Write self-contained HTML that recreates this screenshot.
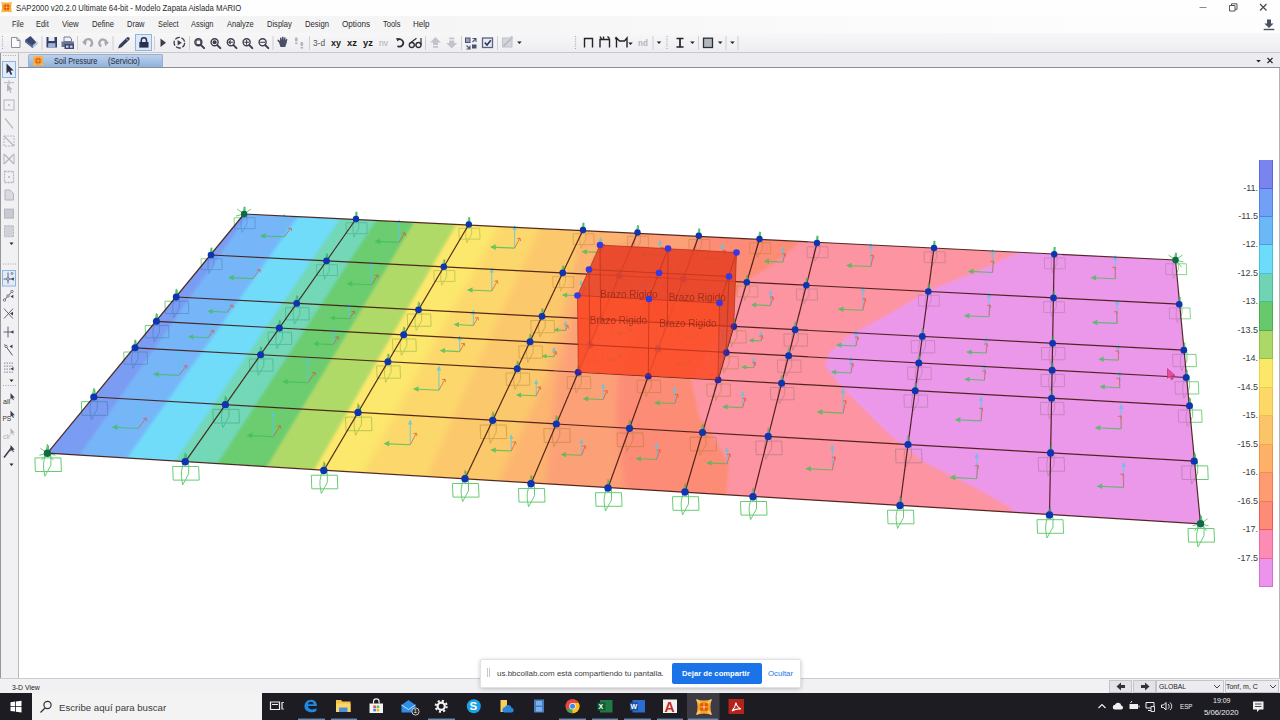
<!DOCTYPE html><html lang="es"><head><meta charset="utf-8"><title>SAP2000</title><style>
*{margin:0;padding:0;box-sizing:border-box}
html,body{width:1280px;height:720px;overflow:hidden;background:#fff}
body{font-family:"Liberation Sans",sans-serif;color:#222;position:relative}
#app{position:absolute;left:0;top:0;width:1280px;height:720px;overflow:hidden;background:#fff}
.abs{position:absolute}
.t{position:absolute;white-space:nowrap;line-height:1}
#title{left:0;top:0;width:1280px;height:16px;background:#fefefe}
#menu{left:0;top:16px;width:1280px;height:17px;background:linear-gradient(90deg,#f3f3f4 0%,#f6f6f7 40%,#fdfdfd 85%)}
#tool{left:0;top:33px;width:1280px;height:19px;background:linear-gradient(#f7f7f8,#eeeef1)}
#tabs{left:0;top:52px;width:1280px;height:16px;background:#ebebf0;border-top:1px solid #c9c9cc;border-bottom:1px solid #8e8e92}
#tab{left:28px;top:54px;width:135px;height:13px;background:linear-gradient(#bcd0ea,#8fb2dd);border:1px solid #9ab0cc;border-bottom:none;border-radius:2px 2px 0 0}
#left{left:0;top:53px;width:18.5px;height:626px;background:#f1f1f4;border-right:1px solid #b9b9be;border-left:1px solid #96969a}
#status{left:0;top:678px;width:1280px;height:15px;background:#f1f1f4;border-top:1px solid #cdcdd0}
#task{left:0;top:693px;width:1280px;height:27px;background:#1d1c23}
#search{left:32px;top:693px;width:230px;height:27px;background:#f3f3f4}
.m{position:absolute;top:20px;font-size:8.6px;line-height:9px;color:#2a2a2a;white-space:nowrap}
#share{left:480px;top:658.5px;width:321px;height:29px;background:#fff;border:1px solid #e2e2e5;border-radius:2px;box-shadow:0 1px 4px rgba(0,0,0,.22)}
#stop{left:672px;top:662.5px;width:89.5px;height:21px;background:#1a73e8;border-radius:2px;color:#fff;font-weight:bold;font-size:7.6px;text-align:center;line-height:19px;white-space:nowrap}
</style></head><body><div id="app">
<svg id="model" width="1280" height="720" viewBox="0 0 1280 720" style="position:absolute;left:0;top:0">
<defs><clipPath id="slab"><polygon points="244.1,214 1175.5,260 1200.5,523.8 47.4,453.2"/></clipPath>
<filter id="bl" x="-5%" y="-5%" width="110%" height="110%"><feGaussianBlur stdDeviation="1.4"/></filter>
<filter id="bl2" x="-5%" y="-5%" width="110%" height="110%"><feGaussianBlur stdDeviation="0.45"/></filter>
<g id="sp"><path d="M-12.5 4.7h26l.5 13.6h-26zM0 -9L3.5 3v9L-2.5 23l-1.3-8v-5z" fill="none" stroke-width="1"/></g>
<filter id="bl3" x="-2%" y="-2%" width="104%" height="104%"><feGaussianBlur stdDeviation="0.3"/></filter>
<filter id="blw" x="-5%" y="-5%" width="110%" height="110%"><feGaussianBlur stdDeviation="3.5"/></filter>
</defs>
<g opacity=".85" filter="url(#bl2)">
<use href="#sp" transform="translate(244.1 214) scale(0.8)" stroke="#4cc25a"/>
<use href="#sp" transform="translate(356 219) scale(0.8)" stroke="#4cc25a"/>
<use href="#sp" transform="translate(468.8 224.5) scale(0.8)" stroke="#4cc25a"/>
<use href="#sp" transform="translate(583 230) scale(0.8)" stroke="#4cc25a"/>
<use href="#sp" transform="translate(637.5 232.5) scale(0.8)" stroke="#4cc25a"/>
<use href="#sp" transform="translate(698.8 235.8) scale(0.8)" stroke="#4cc25a"/>
<use href="#sp" transform="translate(759.5 239) scale(0.8)" stroke="#4cc25a"/>
<use href="#sp" transform="translate(817 243) scale(0.8)" stroke="#4cc25a"/>
<use href="#sp" transform="translate(934 248) scale(0.8)" stroke="#4cc25a"/>
<use href="#sp" transform="translate(1054.2 254.2) scale(0.8)" stroke="#4cc25a"/>
<use href="#sp" transform="translate(1175.5 260) scale(0.8)" stroke="#4cc25a"/>
<use href="#sp" transform="translate(211 255) scale(0.8)" stroke="#4cc25a"/>
<use href="#sp" transform="translate(1179.2 304.2) scale(0.8)" stroke="#4cc25a"/>
<use href="#sp" transform="translate(176.2 297) scale(0.9)" stroke="#4cc25a"/>
<use href="#sp" transform="translate(1183.8 350.2) scale(0.9)" stroke="#4cc25a"/>
<use href="#sp" transform="translate(156.4 321.3) scale(0.9)" stroke="#4cc25a"/>
<use href="#sp" transform="translate(1186.2 377.5) scale(0.9)" stroke="#4cc25a"/>
<use href="#sp" transform="translate(135 347.8) scale(0.9)" stroke="#4cc25a"/>
<use href="#sp" transform="translate(1189.5 405.8) scale(0.9)" stroke="#4cc25a"/>
<use href="#sp" transform="translate(93.8 397) scale(1)" stroke="#4cc25a"/>
<use href="#sp" transform="translate(1194.2 461.2) scale(1)" stroke="#4cc25a"/>
<use href="#sp" transform="translate(47.4 453.2) scale(1)" stroke="#4cc25a"/>
<use href="#sp" transform="translate(185.2 461.8) scale(1)" stroke="#4cc25a"/>
<use href="#sp" transform="translate(323.8 470.5) scale(1)" stroke="#4cc25a"/>
<use href="#sp" transform="translate(465 478.8) scale(1)" stroke="#4cc25a"/>
<use href="#sp" transform="translate(531 483.8) scale(1)" stroke="#4cc25a"/>
<use href="#sp" transform="translate(608 488) scale(1)" stroke="#4cc25a"/>
<use href="#sp" transform="translate(685 492) scale(1)" stroke="#4cc25a"/>
<use href="#sp" transform="translate(753 496.8) scale(1)" stroke="#4cc25a"/>
<use href="#sp" transform="translate(900 505.5) scale(1)" stroke="#4cc25a"/>
<use href="#sp" transform="translate(1049.5 515) scale(1)" stroke="#4cc25a"/>
<use href="#sp" transform="translate(1200.5 523.8) scale(1)" stroke="#4cc25a"/>
<path d="M244.1 214l-7 -5M244.1 214l7 -5M244.1 214l-8 2M244.1 214l8 2M244.1 214l-6 7M244.1 214l6 7" stroke="#4cc25a" stroke-width="1" fill="none"/>
<path d="M1175.5 260l-7 -5M1175.5 260l7 -5M1175.5 260l-8 2M1175.5 260l8 2M1175.5 260l-6 7M1175.5 260l6 7" stroke="#4cc25a" stroke-width="1" fill="none"/>
<path d="M47.4 453.2l-7 -5M47.4 453.2l7 -5M47.4 453.2l-8 2M47.4 453.2l8 2M47.4 453.2l-6 7M47.4 453.2l6 7" stroke="#4cc25a" stroke-width="1" fill="none"/>
<path d="M1200.5 523.8l-7 -5M1200.5 523.8l7 -5M1200.5 523.8l-8 2M1200.5 523.8l8 2M1200.5 523.8l-6 7M1200.5 523.8l6 7" stroke="#4cc25a" stroke-width="1" fill="none"/>
</g>
<g clip-path="url(#slab)">
<g filter="url(#bl)">
<rect x="0" y="150" width="1280" height="450" fill="#7a9cf2"/>
<polygon points="250,100 250,212 77.5,458 47.5,620 1400,620 1400,100" fill="#76b6f8"/>
<polygon points="299,100 299,215 125,461 95,620 1400,620 1400,100" fill="#70dcfa"/>
<polygon points="341,100 341,217 173,464 143,620 1400,620 1400,100" fill="#72d8b8"/>
<polygon points="377,100 377,219 215,467 185,620 1400,620 1400,100" fill="#6ccc70"/>
<polygon points="415,100 415,221 265,470 235,620 1400,620 1400,100" fill="#b0da68"/>
<polygon points="458,100 458,222 357.5,395 312,474 282,620 1400,620 1400,100" fill="#fce86c"/>
</g><g filter="url(#blw)">
<polygon points="500,100 500,224 405,395 361,476 331,620 1400,620 1400,100" fill="#fcd86c"/>
<polygon points="541,100 541,226 462.5,395 425,480 395,620 1400,620 1400,100" fill="#fcc86c"/>
<polygon points="584,100 584,228 562,315 545,380 497,486 467,620 1400,620 1400,100" fill="#fcb470"/>
<polygon points="641,100 641,231 600,260 572,320 556,380 545,488 515,620 1400,620 1400,100" fill="#fca078"/>
<polygon points="702,100 702,234 650,300 618,370 616,420 624,492 594,620 1400,620 1400,100" fill="#fc8c76"/>
</g><g filter="url(#bl)">
<polygon points="802,100 802,240 785,255 764,270 742,283 720,330 691,379 699,417 710,432 729,464 726,498 696,620 1400,620 1400,100" fill="#fc94a2"/>
<polygon points="1022,100 1022,251 975,272.5 930,290 887.5,315 850,335 829,353 825,366 840,385 860,405 890,435 925,462.5 975,487.5 1010,507.5 1016,516 986,620 1400,620 1400,100" fill="#ec98ea"/>
</g></g>
<g opacity=".42" clip-path="url(#slab)">
<use href="#sp" transform="translate(244.1 214) scale(0.8)" stroke="#2f6f9a"/>
<use href="#sp" transform="translate(356 219) scale(0.8)" stroke="#2f8f6a"/>
<use href="#sp" transform="translate(468.8 224.5) scale(0.8)" stroke="#5a9a2a"/>
<use href="#sp" transform="translate(583 230) scale(0.8)" stroke="#a07a20"/>
<use href="#sp" transform="translate(637.5 232.5) scale(0.8)" stroke="#a07a20"/>
<use href="#sp" transform="translate(698.8 235.8) scale(0.8)" stroke="#a07a20"/>
<use href="#sp" transform="translate(759.5 239) scale(0.8)" stroke="#a07a20"/>
<use href="#sp" transform="translate(817 243) scale(0.8)" stroke="#8a6a80"/>
<use href="#sp" transform="translate(934 248) scale(0.8)" stroke="#8a6a80"/>
<use href="#sp" transform="translate(1054.2 254.2) scale(0.8)" stroke="#8a6a80"/>
<use href="#sp" transform="translate(1175.5 260) scale(0.8)" stroke="#8a6a80"/>
<use href="#sp" transform="translate(211 255) scale(0.8)" stroke="#2f6f9a"/>
<use href="#sp" transform="translate(326.5 260.9) scale(0.8)" stroke="#2f8f6a"/>
<use href="#sp" transform="translate(443.8 266.8) scale(0.8)" stroke="#5a9a2a"/>
<use href="#sp" transform="translate(562.7 272.9) scale(0.8)" stroke="#a07a20"/>
<use href="#sp" transform="translate(619.2 275.8) scale(0.8)" stroke="#a07a20"/>
<use href="#sp" transform="translate(683.2 279) scale(0.8)" stroke="#a07a20"/>
<use href="#sp" transform="translate(746.8 282.3) scale(0.8)" stroke="#a07a20"/>
<use href="#sp" transform="translate(806.3 285.3) scale(0.8)" stroke="#8a6a80"/>
<use href="#sp" transform="translate(928.3 291.5) scale(0.8)" stroke="#8a6a80"/>
<use href="#sp" transform="translate(1053.5 297.9) scale(0.8)" stroke="#8a6a80"/>
<use href="#sp" transform="translate(1179.2 304.2) scale(0.8)" stroke="#8a6a80"/>
<use href="#sp" transform="translate(176.2 297) scale(0.9)" stroke="#2f6f9a"/>
<use href="#sp" transform="translate(296.7 303.4) scale(0.9)" stroke="#2f8f6a"/>
<use href="#sp" transform="translate(418.5 309.8) scale(0.9)" stroke="#5a9a2a"/>
<use href="#sp" transform="translate(542 316.3) scale(0.9)" stroke="#a07a20"/>
<use href="#sp" transform="translate(600.7 319.4) scale(0.9)" stroke="#a07a20"/>
<use href="#sp" transform="translate(667.4 323) scale(0.9)" stroke="#a07a20"/>
<use href="#sp" transform="translate(733.7 326.5) scale(0.9)" stroke="#a07a20"/>
<use href="#sp" transform="translate(795.1 329.7) scale(0.9)" stroke="#8a6a80"/>
<use href="#sp" transform="translate(922.3 336.4) scale(0.9)" stroke="#8a6a80"/>
<use href="#sp" transform="translate(1052.6 343.3) scale(0.9)" stroke="#8a6a80"/>
<use href="#sp" transform="translate(1183.8 350.2) scale(0.9)" stroke="#8a6a80"/>
<use href="#sp" transform="translate(156.4 321.3) scale(0.9)" stroke="#2f6f9a"/>
<use href="#sp" transform="translate(279.3 328) scale(0.9)" stroke="#2f8f6a"/>
<use href="#sp" transform="translate(403.7 334.8) scale(0.9)" stroke="#5a9a2a"/>
<use href="#sp" transform="translate(530 341.7) scale(0.9)" stroke="#a07a20"/>
<use href="#sp" transform="translate(589.8 345) scale(0.9)" stroke="#a07a20"/>
<use href="#sp" transform="translate(658.1 348.7) scale(0.9)" stroke="#a07a20"/>
<use href="#sp" transform="translate(726.1 352.4) scale(0.9)" stroke="#a07a20"/>
<use href="#sp" transform="translate(788.6 355.8) scale(0.9)" stroke="#8a6a80"/>
<use href="#sp" transform="translate(918.8 362.9) scale(0.9)" stroke="#8a6a80"/>
<use href="#sp" transform="translate(1052.1 370.2) scale(0.9)" stroke="#8a6a80"/>
<use href="#sp" transform="translate(1186.2 377.5) scale(0.9)" stroke="#8a6a80"/>
<use href="#sp" transform="translate(135 347.8) scale(0.9)" stroke="#2f6f9a"/>
<use href="#sp" transform="translate(260.6 354.7) scale(0.9)" stroke="#2f8f6a"/>
<use href="#sp" transform="translate(387.9 361.7) scale(0.9)" stroke="#5a9a2a"/>
<use href="#sp" transform="translate(517.2 368.8) scale(0.9)" stroke="#a07a20"/>
<use href="#sp" transform="translate(578.3 372.2) scale(0.9)" stroke="#a07a20"/>
<use href="#sp" transform="translate(648.3 376) scale(0.9)" stroke="#a07a20"/>
<use href="#sp" transform="translate(718 379.8) scale(0.9)" stroke="#a07a20"/>
<use href="#sp" transform="translate(781.6 383.3) scale(0.9)" stroke="#8a6a80"/>
<use href="#sp" transform="translate(915.2 390.7) scale(0.9)" stroke="#8a6a80"/>
<use href="#sp" transform="translate(1051.6 398.2) scale(0.9)" stroke="#8a6a80"/>
<use href="#sp" transform="translate(1189.5 405.8) scale(0.9)" stroke="#8a6a80"/>
<use href="#sp" transform="translate(93.8 397) scale(1)" stroke="#2f6f9a"/>
<use href="#sp" transform="translate(225.4 404.7) scale(1)" stroke="#2f8f6a"/>
<use href="#sp" transform="translate(358 412.4) scale(1)" stroke="#5a9a2a"/>
<use href="#sp" transform="translate(492.7 420.3) scale(1)" stroke="#a07a20"/>
<use href="#sp" transform="translate(556.3 424) scale(1)" stroke="#a07a20"/>
<use href="#sp" transform="translate(629.5 428.3) scale(1)" stroke="#a07a20"/>
<use href="#sp" transform="translate(702.5 432.5) scale(1)" stroke="#a07a20"/>
<use href="#sp" transform="translate(768.2 436.4) scale(1)" stroke="#8a6a80"/>
<use href="#sp" transform="translate(908 444.5) scale(1)" stroke="#8a6a80"/>
<use href="#sp" transform="translate(1050.6 452.9) scale(1)" stroke="#8a6a80"/>
<use href="#sp" transform="translate(1194.2 461.2) scale(1)" stroke="#8a6a80"/>
<use href="#sp" transform="translate(47.4 453.2) scale(1)" stroke="#2f6f9a"/>
<use href="#sp" transform="translate(185.2 461.8) scale(1)" stroke="#2f8f6a"/>
<use href="#sp" transform="translate(323.8 470.5) scale(1)" stroke="#5a9a2a"/>
<use href="#sp" transform="translate(465 478.8) scale(1)" stroke="#a07a20"/>
<use href="#sp" transform="translate(531 483.8) scale(1)" stroke="#a07a20"/>
<use href="#sp" transform="translate(608 488) scale(1)" stroke="#a07a20"/>
<use href="#sp" transform="translate(685 492) scale(1)" stroke="#a07a20"/>
<use href="#sp" transform="translate(753 496.8) scale(1)" stroke="#8a6a80"/>
<use href="#sp" transform="translate(900 505.5) scale(1)" stroke="#8a6a80"/>
<use href="#sp" transform="translate(1049.5 515) scale(1)" stroke="#8a6a80"/>
<use href="#sp" transform="translate(1200.5 523.8) scale(1)" stroke="#8a6a80"/>
</g>
<g fill="none" stroke-width="1.1" opacity=".78" filter="url(#bl2)">
<path d="M284.2 236.8L261 235.9" stroke="#3fbf55"/>
<path d="M260 235.9l5.5 -2.8v5.6z" fill="#3fbf55" stroke="none"/>
<path d="M284.2 236.8V214.7" stroke="#55c8e8"/>
<path d="M284.2 213.7l-2.3 5h4.6z" fill="#55c8e8" stroke="none"/>
<path d="M284.2 236.8L291.1 228" stroke="#d8553a" stroke-width=".9"/>
<path d="M291.1 228l-3 .6M291.1 228l.6 3" stroke="#d8553a" stroke-width=".9"/>
<path d="M398.9 242.4L375.6 241.4" stroke="#3fbf55"/>
<path d="M374.6 241.4l5.5 -2.8v5.6z" fill="#3fbf55" stroke="none"/>
<path d="M398.9 242.4V220.2" stroke="#55c8e8"/>
<path d="M398.9 219.2l-2.3 5h4.6z" fill="#55c8e8" stroke="none"/>
<path d="M398.9 242.4L405.1 232.9" stroke="#d8553a" stroke-width=".9"/>
<path d="M405.1 232.9l-3 .6M405.1 232.9l.6 3" stroke="#d8553a" stroke-width=".9"/>
<path d="M514.6 248.1L491.2 247.1" stroke="#3fbf55"/>
<path d="M490.2 247.1l5.5 -2.8v5.6z" fill="#3fbf55" stroke="none"/>
<path d="M514.6 248.1V225.9" stroke="#55c8e8"/>
<path d="M514.6 224.9l-2.3 5h4.6z" fill="#55c8e8" stroke="none"/>
<path d="M514.6 248.1L520 238.1" stroke="#d8553a" stroke-width=".9"/>
<path d="M520 238.1l-3 .6M520 238.1l.6 3" stroke="#d8553a" stroke-width=".9"/>
<path d="M600.7 252.4L582.6 251.8" stroke="#3fbf55"/>
<path d="M581.6 251.8l5.2 -2.6v5.3z" fill="#3fbf55" stroke="none"/>
<path d="M600.7 252.4V237.9" stroke="#55c8e8"/>
<path d="M600.7 236.9l-2.2 4.7h4.3z" fill="#55c8e8" stroke="none"/>
<path d="M600.7 252.4L604.3 244.4" stroke="#d8553a" stroke-width=".9"/>
<path d="M604.3 244.4l-3 .6M604.3 244.4l.6 3" stroke="#d8553a" stroke-width=".9"/>
<path d="M659.9 255.3L641.8 254.6" stroke="#3fbf55"/>
<path d="M640.8 254.6l5.2 -2.6v5.3z" fill="#3fbf55" stroke="none"/>
<path d="M659.9 255.3V240.8" stroke="#55c8e8"/>
<path d="M659.9 239.8l-2.2 4.7h4.3z" fill="#55c8e8" stroke="none"/>
<path d="M659.9 255.3L663.1 247.1" stroke="#d8553a" stroke-width=".9"/>
<path d="M663.1 247.1l-3 .6M663.1 247.1l.6 3" stroke="#d8553a" stroke-width=".9"/>
<path d="M722.3 258.5L704.2 257.9" stroke="#3fbf55"/>
<path d="M703.2 257.9l5.2 -2.6v5.3z" fill="#3fbf55" stroke="none"/>
<path d="M722.3 258.5V244" stroke="#55c8e8"/>
<path d="M722.3 243l-2.2 4.7h4.3z" fill="#55c8e8" stroke="none"/>
<path d="M722.3 258.5L725 250.2" stroke="#d8553a" stroke-width=".9"/>
<path d="M725 250.2l-3 .6M725 250.2l.6 3" stroke="#d8553a" stroke-width=".9"/>
<path d="M782.9 262.1L764.8 261.2" stroke="#3fbf55"/>
<path d="M763.8 261.2l5.2 -2.6v5.3z" fill="#3fbf55" stroke="none"/>
<path d="M782.9 262.1V247.6" stroke="#55c8e8"/>
<path d="M782.9 246.6l-2.2 4.7h4.3z" fill="#55c8e8" stroke="none"/>
<path d="M782.9 262.1L785 253.5" stroke="#d8553a" stroke-width=".9"/>
<path d="M785 253.5l-3 .6M785 253.5l.6 3" stroke="#d8553a" stroke-width=".9"/>
<path d="M870.8 266.5L847.2 265.5" stroke="#3fbf55"/>
<path d="M846.2 265.5l5.5 -2.8v5.6z" fill="#3fbf55" stroke="none"/>
<path d="M870.8 266.5V244" stroke="#55c8e8"/>
<path d="M870.8 243l-2.3 5h4.6z" fill="#55c8e8" stroke="none"/>
<path d="M870.8 266.5L873.3 255.2" stroke="#d8553a" stroke-width=".9"/>
<path d="M873.3 255.2l-3 .6M873.3 255.2l.6 3" stroke="#d8553a" stroke-width=".9"/>
<path d="M992.6 272.5L969 271.4" stroke="#3fbf55"/>
<path d="M968 271.4l5.5 -2.8v5.6z" fill="#3fbf55" stroke="none"/>
<path d="M992.6 272.5V250" stroke="#55c8e8"/>
<path d="M992.6 249l-2.3 5h4.6z" fill="#55c8e8" stroke="none"/>
<path d="M992.6 272.5L993.4 260.9" stroke="#d8553a" stroke-width=".9"/>
<path d="M993.4 260.9l-3 .6M993.4 260.9l.6 3" stroke="#d8553a" stroke-width=".9"/>
<path d="M1115.3 278.7L1091.6 277.7" stroke="#3fbf55"/>
<path d="M1090.6 277.7l5.5 -2.8v5.6z" fill="#3fbf55" stroke="none"/>
<path d="M1115.3 278.7V256.1" stroke="#55c8e8"/>
<path d="M1115.3 255.1l-2.3 5h4.6z" fill="#55c8e8" stroke="none"/>
<path d="M1115.3 278.7L1115.1 267" stroke="#d8553a" stroke-width=".9"/>
<path d="M1115.1 267l-3 .6M1115.1 267l.6 3" stroke="#d8553a" stroke-width=".9"/>
<path d="M252.8 278.6L229.1 277.6" stroke="#3fbf55"/>
<path d="M228.1 277.6l5.5 -2.8v5.6z" fill="#3fbf55" stroke="none"/>
<path d="M252.8 278.6V256.1" stroke="#55c8e8"/>
<path d="M252.8 255.1l-2.3 5h4.6z" fill="#55c8e8" stroke="none"/>
<path d="M252.8 278.6L259.9 269.4" stroke="#d8553a" stroke-width=".9"/>
<path d="M259.9 269.4l-3 .6M259.9 269.4l.6 3" stroke="#d8553a" stroke-width=".9"/>
<path d="M371.5 284.8L347.7 283.7" stroke="#3fbf55"/>
<path d="M346.7 283.7l5.5 -2.8v5.6z" fill="#3fbf55" stroke="none"/>
<path d="M371.5 284.8V262.2" stroke="#55c8e8"/>
<path d="M371.5 261.2l-2.3 5h4.6z" fill="#55c8e8" stroke="none"/>
<path d="M371.5 284.8L377.9 275" stroke="#d8553a" stroke-width=".9"/>
<path d="M377.9 275l-3 .6M377.9 275l.6 3" stroke="#d8553a" stroke-width=".9"/>
<path d="M491.8 291L468 290" stroke="#3fbf55"/>
<path d="M467 290l5.5 -2.8v5.6z" fill="#3fbf55" stroke="none"/>
<path d="M491.8 291V268.4" stroke="#55c8e8"/>
<path d="M491.8 267.4l-2.3 5h4.6z" fill="#55c8e8" stroke="none"/>
<path d="M491.8 291L497.4 280.7" stroke="#d8553a" stroke-width=".9"/>
<path d="M497.4 280.7l-3 .6M497.4 280.7l.6 3" stroke="#d8553a" stroke-width=".9"/>
<path d="M581.3 295.7L562.9 295" stroke="#3fbf55"/>
<path d="M561.9 295l5.2 -2.6v5.3z" fill="#3fbf55" stroke="none"/>
<path d="M581.3 295.7V281" stroke="#55c8e8"/>
<path d="M581.3 280l-2.2 4.7h4.3z" fill="#55c8e8" stroke="none"/>
<path d="M581.3 295.7L585 287.4" stroke="#d8553a" stroke-width=".9"/>
<path d="M585 287.4l-3 .6M585 287.4l.6 3" stroke="#d8553a" stroke-width=".9"/>
<path d="M642.7 298.8L624.3 298.1" stroke="#3fbf55"/>
<path d="M623.3 298.1l5.2 -2.6v5.3z" fill="#3fbf55" stroke="none"/>
<path d="M642.7 298.8V284.1" stroke="#55c8e8"/>
<path d="M642.7 283.1l-2.2 4.7h4.3z" fill="#55c8e8" stroke="none"/>
<path d="M642.7 298.8L646.1 290.4" stroke="#d8553a" stroke-width=".9"/>
<path d="M646.1 290.4l-3 .6M646.1 290.4l.6 3" stroke="#d8553a" stroke-width=".9"/>
<path d="M707.9 302.2L689.4 301.5" stroke="#3fbf55"/>
<path d="M688.4 301.5l5.2 -2.6v5.3z" fill="#3fbf55" stroke="none"/>
<path d="M707.9 302.2V287.4" stroke="#55c8e8"/>
<path d="M707.9 286.4l-2.2 4.7h4.3z" fill="#55c8e8" stroke="none"/>
<path d="M707.9 302.2L710.7 293.5" stroke="#d8553a" stroke-width=".9"/>
<path d="M710.7 293.5l-3 .6M710.7 293.5l.6 3" stroke="#d8553a" stroke-width=".9"/>
<path d="M770.5 305.6L752.1 304.8" stroke="#3fbf55"/>
<path d="M751.1 304.8l5.2 -2.6v5.3z" fill="#3fbf55" stroke="none"/>
<path d="M770.5 305.6V290.8" stroke="#55c8e8"/>
<path d="M770.5 289.8l-2.2 4.7h4.3z" fill="#55c8e8" stroke="none"/>
<path d="M770.5 305.6L773 296.8" stroke="#d8553a" stroke-width=".9"/>
<path d="M773 296.8l-3 .6M773 296.8l.6 3" stroke="#d8553a" stroke-width=".9"/>
<path d="M862.9 310.2L838.9 309.2" stroke="#3fbf55"/>
<path d="M837.9 309.2l5.5 -2.8v5.6z" fill="#3fbf55" stroke="none"/>
<path d="M862.9 310.2V287.4" stroke="#55c8e8"/>
<path d="M862.9 286.4l-2.3 5h4.6z" fill="#55c8e8" stroke="none"/>
<path d="M862.9 310.2L865.3 298.5" stroke="#d8553a" stroke-width=".9"/>
<path d="M865.3 298.5l-3 .6M865.3 298.5l.6 3" stroke="#d8553a" stroke-width=".9"/>
<path d="M989 316.8L964.9 315.7" stroke="#3fbf55"/>
<path d="M963.9 315.7l5.5 -2.8v5.6z" fill="#3fbf55" stroke="none"/>
<path d="M989 316.8V293.9" stroke="#55c8e8"/>
<path d="M989 292.9l-2.3 5h4.6z" fill="#55c8e8" stroke="none"/>
<path d="M989 316.8L990 304.9" stroke="#d8553a" stroke-width=".9"/>
<path d="M990 304.9l-3 .6M990 304.9l.6 3" stroke="#d8553a" stroke-width=".9"/>
<path d="M1117.1 323.4L1092.9 322.4" stroke="#3fbf55"/>
<path d="M1091.9 322.4l5.5 -2.8v5.6z" fill="#3fbf55" stroke="none"/>
<path d="M1117.1 323.4V300.4" stroke="#55c8e8"/>
<path d="M1117.1 299.4l-2.3 5h4.6z" fill="#55c8e8" stroke="none"/>
<path d="M1117.1 323.4L1116.7 311.4" stroke="#d8553a" stroke-width=".9"/>
<path d="M1116.7 311.4l-3 .6M1116.7 311.4l.6 3" stroke="#d8553a" stroke-width=".9"/>
<path d="M227 312.3L208.5 311.3" stroke="#3fbf55"/>
<path d="M207.5 311.3l5.2 -2.6v5.3z" fill="#3fbf55" stroke="none"/>
<path d="M227 312.3V297.4" stroke="#55c8e8"/>
<path d="M227 296.4l-2.2 4.7h4.3z" fill="#55c8e8" stroke="none"/>
<path d="M227 312.3L232.7 305" stroke="#d8553a" stroke-width=".9"/>
<path d="M232.7 305l-3 .6M232.7 305l.6 3" stroke="#d8553a" stroke-width=".9"/>
<path d="M349.4 318.8L330.8 317.9" stroke="#3fbf55"/>
<path d="M329.8 317.9l5.2 -2.6v5.3z" fill="#3fbf55" stroke="none"/>
<path d="M349.4 318.8V303.9" stroke="#55c8e8"/>
<path d="M349.4 302.9l-2.2 4.7h4.3z" fill="#55c8e8" stroke="none"/>
<path d="M349.4 318.8L354.5 311.1" stroke="#d8553a" stroke-width=".9"/>
<path d="M354.5 311.1l-3 .6M354.5 311.1l.6 3" stroke="#d8553a" stroke-width=".9"/>
<path d="M473.4 325.5L454.7 324.5" stroke="#3fbf55"/>
<path d="M453.7 324.5l5.2 -2.6v5.3z" fill="#3fbf55" stroke="none"/>
<path d="M473.4 325.5V310.6" stroke="#55c8e8"/>
<path d="M473.4 309.6l-2.2 4.7h4.3z" fill="#55c8e8" stroke="none"/>
<path d="M473.4 325.5L477.9 317.4" stroke="#d8553a" stroke-width=".9"/>
<path d="M477.9 317.4l-3 .6M477.9 317.4l.6 3" stroke="#d8553a" stroke-width=".9"/>
<path d="M565.6 330.5L554.7 329.9" stroke="#3fbf55"/>
<path d="M553.7 329.9l4.7 -2.4v4.8z" fill="#3fbf55" stroke="none"/>
<path d="M565.6 330.5V321.7" stroke="#55c8e8"/>
<path d="M565.6 320.7l-2 4.3h4z" fill="#55c8e8" stroke="none"/>
<path d="M565.6 330.5L567.9 325.5" stroke="#d8553a" stroke-width=".9"/>
<path d="M567.9 325.5l-3 .6M567.9 325.5l.6 3" stroke="#d8553a" stroke-width=".9"/>
<path d="M629 333.8L618 333.3" stroke="#3fbf55"/>
<path d="M617 333.3l4.7 -2.4v4.8z" fill="#3fbf55" stroke="none"/>
<path d="M629 333.8V325.1" stroke="#55c8e8"/>
<path d="M629 324.1l-2 4.3h4z" fill="#55c8e8" stroke="none"/>
<path d="M629 333.8L631 328.8" stroke="#d8553a" stroke-width=".9"/>
<path d="M631 328.8l-3 .6M631 328.8l.6 3" stroke="#d8553a" stroke-width=".9"/>
<path d="M696.3 337.5L685.4 336.9" stroke="#3fbf55"/>
<path d="M684.4 336.9l4.7 -2.4v4.8z" fill="#3fbf55" stroke="none"/>
<path d="M696.3 337.5V328.7" stroke="#55c8e8"/>
<path d="M696.3 327.7l-2 4.3h4z" fill="#55c8e8" stroke="none"/>
<path d="M696.3 337.5L698 332.3" stroke="#d8553a" stroke-width=".9"/>
<path d="M698 332.3l-3 .6M698 332.3l.6 3" stroke="#d8553a" stroke-width=".9"/>
<path d="M760.9 341L749.9 340.4" stroke="#3fbf55"/>
<path d="M748.9 340.4l4.7 -2.4v4.8z" fill="#3fbf55" stroke="none"/>
<path d="M760.9 341V332.2" stroke="#55c8e8"/>
<path d="M760.9 331.2l-2 4.3h4z" fill="#55c8e8" stroke="none"/>
<path d="M760.9 341L762.3 335.7" stroke="#d8553a" stroke-width=".9"/>
<path d="M762.3 335.7l-3 .6M762.3 335.7l.6 3" stroke="#d8553a" stroke-width=".9"/>
<path d="M856 346L837.1 345.1" stroke="#3fbf55"/>
<path d="M836.1 345.1l5.2 -2.6v5.3z" fill="#3fbf55" stroke="none"/>
<path d="M856 346V331" stroke="#55c8e8"/>
<path d="M856 330l-2.2 4.7h4.3z" fill="#55c8e8" stroke="none"/>
<path d="M856 346L857.9 336.8" stroke="#d8553a" stroke-width=".9"/>
<path d="M857.9 336.8l-3 .6M857.9 336.8l.6 3" stroke="#d8553a" stroke-width=".9"/>
<path d="M986.2 353L967.3 352.1" stroke="#3fbf55"/>
<path d="M966.3 352.1l5.2 -2.6v5.3z" fill="#3fbf55" stroke="none"/>
<path d="M986.2 353V337.9" stroke="#55c8e8"/>
<path d="M986.2 336.9l-2.2 4.7h4.3z" fill="#55c8e8" stroke="none"/>
<path d="M986.2 353L987.1 343.6" stroke="#d8553a" stroke-width=".9"/>
<path d="M987.1 343.6l-3 .6M987.1 343.6l.6 3" stroke="#d8553a" stroke-width=".9"/>
<path d="M1118.4 360.1L1099.5 359.2" stroke="#3fbf55"/>
<path d="M1098.5 359.2l5.2 -2.6v5.3z" fill="#3fbf55" stroke="none"/>
<path d="M1118.4 360.1V345" stroke="#55c8e8"/>
<path d="M1118.4 344l-2.2 4.7h4.3z" fill="#55c8e8" stroke="none"/>
<path d="M1118.4 360.1L1118.3 350.6" stroke="#d8553a" stroke-width=".9"/>
<path d="M1118.3 350.6l-3 .6M1118.3 350.6l.6 3" stroke="#d8553a" stroke-width=".9"/>
<path d="M207.9 337.8L189.1 336.8" stroke="#3fbf55"/>
<path d="M188.1 336.8l5.2 -2.6v5.3z" fill="#3fbf55" stroke="none"/>
<path d="M207.9 337.8V322.8" stroke="#55c8e8"/>
<path d="M207.9 321.8l-2.2 4.7h4.3z" fill="#55c8e8" stroke="none"/>
<path d="M207.9 337.8L213.6 330.3" stroke="#d8553a" stroke-width=".9"/>
<path d="M213.6 330.3l-3 .6M213.6 330.3l.6 3" stroke="#d8553a" stroke-width=".9"/>
<path d="M332.9 344.6L314.1 343.7" stroke="#3fbf55"/>
<path d="M313.1 343.7l5.2 -2.6v5.3z" fill="#3fbf55" stroke="none"/>
<path d="M332.9 344.6V329.6" stroke="#55c8e8"/>
<path d="M332.9 328.6l-2.2 4.7h4.3z" fill="#55c8e8" stroke="none"/>
<path d="M332.9 344.6L338.1 336.7" stroke="#d8553a" stroke-width=".9"/>
<path d="M338.1 336.7l-3 .6M338.1 336.7l.6 3" stroke="#d8553a" stroke-width=".9"/>
<path d="M459.7 351.6L440.8 350.6" stroke="#3fbf55"/>
<path d="M439.8 350.6l5.2 -2.6v5.3z" fill="#3fbf55" stroke="none"/>
<path d="M459.7 351.6V336.5" stroke="#55c8e8"/>
<path d="M459.7 335.5l-2.2 4.7h4.3z" fill="#55c8e8" stroke="none"/>
<path d="M459.7 351.6L464.2 343.2" stroke="#d8553a" stroke-width=".9"/>
<path d="M464.2 343.2l-3 .6M464.2 343.2l.6 3" stroke="#d8553a" stroke-width=".9"/>
<path d="M553.9 356.8L542.8 356.2" stroke="#3fbf55"/>
<path d="M541.8 356.2l4.7 -2.4v4.8z" fill="#3fbf55" stroke="none"/>
<path d="M553.9 356.8V347.9" stroke="#55c8e8"/>
<path d="M553.9 346.9l-2 4.3h4z" fill="#55c8e8" stroke="none"/>
<path d="M553.9 356.8L556.2 351.7" stroke="#d8553a" stroke-width=".9"/>
<path d="M556.2 351.7l-3 .6M556.2 351.7l.6 3" stroke="#d8553a" stroke-width=".9"/>
<path d="M618.7 360.3L607.6 359.7" stroke="#3fbf55"/>
<path d="M606.6 359.7l4.7 -2.4v4.8z" fill="#3fbf55" stroke="none"/>
<path d="M618.7 360.3V351.4" stroke="#55c8e8"/>
<path d="M618.7 350.4l-2 4.3h4z" fill="#55c8e8" stroke="none"/>
<path d="M618.7 360.3L620.7 355.1" stroke="#d8553a" stroke-width=".9"/>
<path d="M620.7 355.1l-3 .6M620.7 355.1l.6 3" stroke="#d8553a" stroke-width=".9"/>
<path d="M687.7 364.1L676.6 363.5" stroke="#3fbf55"/>
<path d="M675.6 363.5l4.7 -2.4v4.8z" fill="#3fbf55" stroke="none"/>
<path d="M687.7 364.1V355.2" stroke="#55c8e8"/>
<path d="M687.7 354.2l-2 4.3h4z" fill="#55c8e8" stroke="none"/>
<path d="M687.7 364.1L689.4 358.7" stroke="#d8553a" stroke-width=".9"/>
<path d="M689.4 358.7l-3 .6M689.4 358.7l.6 3" stroke="#d8553a" stroke-width=".9"/>
<path d="M753.6 367.7L742.5 367.2" stroke="#3fbf55"/>
<path d="M741.5 367.2l4.7 -2.4v4.8z" fill="#3fbf55" stroke="none"/>
<path d="M753.6 367.7V358.8" stroke="#55c8e8"/>
<path d="M753.6 357.8l-2 4.3h4z" fill="#55c8e8" stroke="none"/>
<path d="M753.6 367.7L755.1 362.3" stroke="#d8553a" stroke-width=".9"/>
<path d="M755.1 362.3l-3 .6M755.1 362.3l.6 3" stroke="#d8553a" stroke-width=".9"/>
<path d="M851 373L831.9 372" stroke="#3fbf55"/>
<path d="M830.9 372l5.2 -2.6v5.3z" fill="#3fbf55" stroke="none"/>
<path d="M851 373V357.7" stroke="#55c8e8"/>
<path d="M851 356.7l-2.2 4.7h4.3z" fill="#55c8e8" stroke="none"/>
<path d="M851 373L852.9 363.5" stroke="#d8553a" stroke-width=".9"/>
<path d="M852.9 363.5l-3 .6M852.9 363.5l.6 3" stroke="#d8553a" stroke-width=".9"/>
<path d="M984.4 380.3L965.3 379.3" stroke="#3fbf55"/>
<path d="M964.3 379.3l5.2 -2.6v5.3z" fill="#3fbf55" stroke="none"/>
<path d="M984.4 380.3V365" stroke="#55c8e8"/>
<path d="M984.4 364l-2.2 4.7h4.3z" fill="#55c8e8" stroke="none"/>
<path d="M984.4 380.3L985.2 370.6" stroke="#d8553a" stroke-width=".9"/>
<path d="M985.2 370.6l-3 .6M985.2 370.6l.6 3" stroke="#d8553a" stroke-width=".9"/>
<path d="M1119.8 387.7L1100.6 386.7" stroke="#3fbf55"/>
<path d="M1099.6 386.7l5.2 -2.6v5.3z" fill="#3fbf55" stroke="none"/>
<path d="M1119.8 387.7V372.3" stroke="#55c8e8"/>
<path d="M1119.8 371.3l-2.2 4.7h4.3z" fill="#55c8e8" stroke="none"/>
<path d="M1119.8 387.7L1119.4 377.9" stroke="#d8553a" stroke-width=".9"/>
<path d="M1119.4 377.9l-3 .6M1119.4 377.9l.6 3" stroke="#d8553a" stroke-width=".9"/>
<path d="M178.9 375.4L154.1 374.3" stroke="#3fbf55"/>
<path d="M153.1 374.3l5.5 -2.8v5.6z" fill="#3fbf55" stroke="none"/>
<path d="M178.9 375.4V351.8" stroke="#55c8e8"/>
<path d="M178.9 350.8l-2.3 5h4.6z" fill="#55c8e8" stroke="none"/>
<path d="M178.9 375.4L186.6 365.5" stroke="#d8553a" stroke-width=".9"/>
<path d="M186.6 365.5l-3 .6M186.6 365.5l.6 3" stroke="#d8553a" stroke-width=".9"/>
<path d="M308 382.8L283.2 381.6" stroke="#3fbf55"/>
<path d="M282.2 381.6l5.5 -2.8v5.6z" fill="#3fbf55" stroke="none"/>
<path d="M308 382.8V359.2" stroke="#55c8e8"/>
<path d="M308 358.2l-2.3 5h4.6z" fill="#55c8e8" stroke="none"/>
<path d="M308 382.8L315 372.3" stroke="#d8553a" stroke-width=".9"/>
<path d="M315 372.3l-3 .6M315 372.3l.6 3" stroke="#d8553a" stroke-width=".9"/>
<path d="M438.9 390.2L414 389" stroke="#3fbf55"/>
<path d="M413 389l5.5 -2.8v5.6z" fill="#3fbf55" stroke="none"/>
<path d="M438.9 390.2V366.5" stroke="#55c8e8"/>
<path d="M438.9 365.5l-2.3 5h4.6z" fill="#55c8e8" stroke="none"/>
<path d="M438.9 390.2L445 379.1" stroke="#d8553a" stroke-width=".9"/>
<path d="M445 379.1l-3 .6M445 379.1l.6 3" stroke="#d8553a" stroke-width=".9"/>
<path d="M536.3 395.8L517 395" stroke="#3fbf55"/>
<path d="M516 395l5.2 -2.6v5.3z" fill="#3fbf55" stroke="none"/>
<path d="M536.3 395.8V380.4" stroke="#55c8e8"/>
<path d="M536.3 379.4l-2.2 4.7h4.3z" fill="#55c8e8" stroke="none"/>
<path d="M536.3 395.8L540.3 386.8" stroke="#d8553a" stroke-width=".9"/>
<path d="M540.3 386.8l-3 .6M540.3 386.8l.6 3" stroke="#d8553a" stroke-width=".9"/>
<path d="M603.3 399.5L583.9 398.7" stroke="#3fbf55"/>
<path d="M582.9 398.7l5.2 -2.6v5.3z" fill="#3fbf55" stroke="none"/>
<path d="M603.3 399.5V384.1" stroke="#55c8e8"/>
<path d="M603.3 383.1l-2.2 4.7h4.3z" fill="#55c8e8" stroke="none"/>
<path d="M603.3 399.5L606.9 390.4" stroke="#d8553a" stroke-width=".9"/>
<path d="M606.9 390.4l-3 .6M606.9 390.4l.6 3" stroke="#d8553a" stroke-width=".9"/>
<path d="M674.7 403.5L655.4 402.8" stroke="#3fbf55"/>
<path d="M654.4 402.8l5.2 -2.6v5.3z" fill="#3fbf55" stroke="none"/>
<path d="M674.7 403.5V388.1" stroke="#55c8e8"/>
<path d="M674.7 387.1l-2.2 4.7h4.3z" fill="#55c8e8" stroke="none"/>
<path d="M674.7 403.5L677.8 394.2" stroke="#d8553a" stroke-width=".9"/>
<path d="M677.8 394.2l-3 .6M677.8 394.2l.6 3" stroke="#d8553a" stroke-width=".9"/>
<path d="M742.6 407.6L723.3 406.7" stroke="#3fbf55"/>
<path d="M722.3 406.7l5.2 -2.6v5.3z" fill="#3fbf55" stroke="none"/>
<path d="M742.6 407.6V392.1" stroke="#55c8e8"/>
<path d="M742.6 391.1l-2.2 4.7h4.3z" fill="#55c8e8" stroke="none"/>
<path d="M742.6 407.6L745.3 398" stroke="#d8553a" stroke-width=".9"/>
<path d="M745.3 398l-3 .6M745.3 398l.6 3" stroke="#d8553a" stroke-width=".9"/>
<path d="M843.1 413.1L817.9 411.9" stroke="#3fbf55"/>
<path d="M816.9 411.9l5.5 -2.8v5.6z" fill="#3fbf55" stroke="none"/>
<path d="M843.1 413.1V389.1" stroke="#55c8e8"/>
<path d="M843.1 388.1l-2.3 5h4.6z" fill="#55c8e8" stroke="none"/>
<path d="M843.1 413.1L845.7 400.4" stroke="#d8553a" stroke-width=".9"/>
<path d="M845.7 400.4l-3 .6M845.7 400.4l.6 3" stroke="#d8553a" stroke-width=".9"/>
<path d="M981.1 420.9L955.8 419.7" stroke="#3fbf55"/>
<path d="M954.8 419.7l5.5 -2.8v5.6z" fill="#3fbf55" stroke="none"/>
<path d="M981.1 420.9V396.9" stroke="#55c8e8"/>
<path d="M981.1 395.9l-2.3 5h4.6z" fill="#55c8e8" stroke="none"/>
<path d="M981.1 420.9L982.2 408" stroke="#d8553a" stroke-width=".9"/>
<path d="M982.2 408l-3 .6M982.2 408l.6 3" stroke="#d8553a" stroke-width=".9"/>
<path d="M1121.2 428.9L1095.8 427.7" stroke="#3fbf55"/>
<path d="M1094.8 427.7l5.5 -2.8v5.6z" fill="#3fbf55" stroke="none"/>
<path d="M1121.2 428.9V404.8" stroke="#55c8e8"/>
<path d="M1121.2 403.8l-2.3 5h4.6z" fill="#55c8e8" stroke="none"/>
<path d="M1121.2 428.9L1120.9 415.9" stroke="#d8553a" stroke-width=".9"/>
<path d="M1120.9 415.9l-3 .6M1120.9 415.9l.6 3" stroke="#d8553a" stroke-width=".9"/>
<path d="M138.2 428.5L112.8 427.2" stroke="#3fbf55"/>
<path d="M111.8 427.2l5.5 -2.8v5.6z" fill="#3fbf55" stroke="none"/>
<path d="M138.2 428.5V404.3" stroke="#55c8e8"/>
<path d="M138.2 403.3l-2.3 5h4.6z" fill="#55c8e8" stroke="none"/>
<path d="M138.2 428.5L146.2 418.1" stroke="#d8553a" stroke-width=".9"/>
<path d="M146.2 418.1l-3 .6M146.2 418.1l.6 3" stroke="#d8553a" stroke-width=".9"/>
<path d="M273.2 436.7L247.7 435.4" stroke="#3fbf55"/>
<path d="M246.7 435.4l5.5 -2.8v5.6z" fill="#3fbf55" stroke="none"/>
<path d="M273.2 436.7V412.4" stroke="#55c8e8"/>
<path d="M273.2 411.4l-2.3 5h4.6z" fill="#55c8e8" stroke="none"/>
<path d="M273.2 436.7L280.4 425.7" stroke="#d8553a" stroke-width=".9"/>
<path d="M280.4 425.7l-3 .6M280.4 425.7l.6 3" stroke="#d8553a" stroke-width=".9"/>
<path d="M410.2 444.8L384.7 443.6" stroke="#3fbf55"/>
<path d="M383.7 443.6l5.5 -2.8v5.6z" fill="#3fbf55" stroke="none"/>
<path d="M410.2 444.8V420.5" stroke="#55c8e8"/>
<path d="M410.2 419.5l-2.3 5h4.6z" fill="#55c8e8" stroke="none"/>
<path d="M410.2 444.8L416.4 433.1" stroke="#d8553a" stroke-width=".9"/>
<path d="M416.4 433.1l-3 .6M416.4 433.1l.6 3" stroke="#d8553a" stroke-width=".9"/>
<path d="M511.3 451L491.5 450.1" stroke="#3fbf55"/>
<path d="M490.5 450.1l5.2 -2.6v5.3z" fill="#3fbf55" stroke="none"/>
<path d="M511.3 451V435.2" stroke="#55c8e8"/>
<path d="M511.3 434.2l-2.2 4.7h4.3z" fill="#55c8e8" stroke="none"/>
<path d="M511.3 451L515.5 441.7" stroke="#d8553a" stroke-width=".9"/>
<path d="M515.5 441.7l-3 .6M515.5 441.7l.6 3" stroke="#d8553a" stroke-width=".9"/>
<path d="M581.6 455.3L561.8 454.5" stroke="#3fbf55"/>
<path d="M560.8 454.5l5.2 -2.6v5.3z" fill="#3fbf55" stroke="none"/>
<path d="M581.6 455.3V439.4" stroke="#55c8e8"/>
<path d="M581.6 438.4l-2.2 4.7h4.3z" fill="#55c8e8" stroke="none"/>
<path d="M581.6 455.3L585.3 445.7" stroke="#d8553a" stroke-width=".9"/>
<path d="M585.3 445.7l-3 .6M585.3 445.7l.6 3" stroke="#d8553a" stroke-width=".9"/>
<path d="M656.6 459.5L636.8 458.8" stroke="#3fbf55"/>
<path d="M635.8 458.8l5.2 -2.6v5.3z" fill="#3fbf55" stroke="none"/>
<path d="M656.6 459.5V443.6" stroke="#55c8e8"/>
<path d="M656.6 442.6l-2.2 4.7h4.3z" fill="#55c8e8" stroke="none"/>
<path d="M656.6 459.5L659.8 449.7" stroke="#d8553a" stroke-width=".9"/>
<path d="M659.8 449.7l-3 .6M659.8 449.7l.6 3" stroke="#d8553a" stroke-width=".9"/>
<path d="M727.1 463.8L707.3 462.9" stroke="#3fbf55"/>
<path d="M706.3 462.9l5.2 -2.6v5.3z" fill="#3fbf55" stroke="none"/>
<path d="M727.1 463.8V447.9" stroke="#55c8e8"/>
<path d="M727.1 446.9l-2.2 4.7h4.3z" fill="#55c8e8" stroke="none"/>
<path d="M727.1 463.8L729.9 453.9" stroke="#d8553a" stroke-width=".9"/>
<path d="M729.9 453.9l-3 .6M729.9 453.9l.6 3" stroke="#d8553a" stroke-width=".9"/>
<path d="M832.4 470L806.5 468.8" stroke="#3fbf55"/>
<path d="M805.5 468.8l5.5 -2.8v5.6z" fill="#3fbf55" stroke="none"/>
<path d="M832.4 470V445.4" stroke="#55c8e8"/>
<path d="M832.4 444.4l-2.3 5h4.6z" fill="#55c8e8" stroke="none"/>
<path d="M832.4 470L835 456.8" stroke="#d8553a" stroke-width=".9"/>
<path d="M835 456.8l-3 .6M835 456.8l.6 3" stroke="#d8553a" stroke-width=".9"/>
<path d="M976.7 478.7L950.7 477.4" stroke="#3fbf55"/>
<path d="M949.7 477.4l5.5 -2.8v5.6z" fill="#3fbf55" stroke="none"/>
<path d="M976.7 478.7V454" stroke="#55c8e8"/>
<path d="M976.7 453l-2.3 5h4.6z" fill="#55c8e8" stroke="none"/>
<path d="M976.7 478.7L977.9 465.2" stroke="#d8553a" stroke-width=".9"/>
<path d="M977.9 465.2l-3 .6M977.9 465.2l.6 3" stroke="#d8553a" stroke-width=".9"/>
<path d="M1123.7 487.4L1097.7 486.2" stroke="#3fbf55"/>
<path d="M1096.7 486.2l5.5 -2.8v5.6z" fill="#3fbf55" stroke="none"/>
<path d="M1123.7 487.4V462.7" stroke="#55c8e8"/>
<path d="M1123.7 461.7l-2.3 5h4.6z" fill="#55c8e8" stroke="none"/>
<path d="M1123.7 487.4L1123.1 473.8" stroke="#d8553a" stroke-width=".9"/>
<path d="M1123.1 473.8l-3 .6M1123.1 473.8l.6 3" stroke="#d8553a" stroke-width=".9"/>
</g>
<g stroke="#431611" stroke-width="1.2" opacity=".9" filter="url(#bl3)" fill="none">
<path d="M244.1 214L1175.5 260"/>
<path d="M211 255L1179.2 304.2"/>
<path d="M176.2 297L1183.8 350.2"/>
<path d="M156.4 321.3L1186.2 377.5"/>
<path d="M135 347.8L1189.5 405.8"/>
<path d="M93.8 397L1194.2 461.2"/>
<path d="M47.4 453.2L1200.5 523.8"/>
<path d="M244.1 214L47.4 453.2"/>
<path d="M356 219L185.2 461.8"/>
<path d="M468.8 224.5L323.8 470.5"/>
<path d="M583 230L465 478.8"/>
<path d="M637.5 232.5L531 483.8"/>
<path d="M698.8 235.8L608 488"/>
<path d="M759.5 239L685 492"/>
<path d="M817 243L753 496.8"/>
<path d="M934 248L900 505.5"/>
<path d="M1054.2 254.2L1049.5 515"/>
<path d="M1175.5 260L1200.5 523.8"/>
</g>
<g filter="url(#bl2)">
<path d="M244.1 214l.8 -7.2" stroke="#35b85a" stroke-width="1.6" opacity=".8"/>
<circle cx="244.1" cy="214" r="3.2" fill="#0a6a48"/>
<path d="M356 219l.8 -7.2" stroke="#35b85a" stroke-width="1.6" opacity=".8"/>
<circle cx="356" cy="219" r="3.2" fill="#0c34b0"/>
<path d="M468.8 224.5l.8 -7.2" stroke="#35b85a" stroke-width="1.6" opacity=".8"/>
<circle cx="468.8" cy="224.5" r="3.2" fill="#0c34b0"/>
<path d="M583 230l.8 -7.2" stroke="#35b85a" stroke-width="1.6" opacity=".8"/>
<circle cx="583" cy="230" r="3.2" fill="#0c34b0"/>
<path d="M637.5 232.5l.8 -7.2" stroke="#35b85a" stroke-width="1.6" opacity=".8"/>
<circle cx="637.5" cy="232.5" r="3.2" fill="#0c34b0"/>
<path d="M698.8 235.8l.8 -7.2" stroke="#35b85a" stroke-width="1.6" opacity=".8"/>
<circle cx="698.8" cy="235.8" r="3.2" fill="#0c34b0"/>
<path d="M759.5 239l.8 -7.2" stroke="#35b85a" stroke-width="1.6" opacity=".8"/>
<circle cx="759.5" cy="239" r="3.2" fill="#0c34b0"/>
<path d="M817 243l.8 -7.2" stroke="#35b85a" stroke-width="1.6" opacity=".8"/>
<circle cx="817" cy="243" r="3.2" fill="#0c34b0"/>
<path d="M934 248l.8 -7.2" stroke="#35b85a" stroke-width="1.6" opacity=".8"/>
<circle cx="934" cy="248" r="3.2" fill="#0c34b0"/>
<path d="M1054.2 254.2l.8 -7.2" stroke="#35b85a" stroke-width="1.6" opacity=".8"/>
<circle cx="1054.2" cy="254.2" r="3.2" fill="#0c34b0"/>
<path d="M1175.5 260l.8 -7.2" stroke="#35b85a" stroke-width="1.6" opacity=".8"/>
<circle cx="1175.5" cy="260" r="3.2" fill="#0a6a48"/>
<path d="M211 255l.8 -7.3" stroke="#35b85a" stroke-width="1.6" opacity=".8"/>
<circle cx="211" cy="255" r="3.3" fill="#0c34b0"/>
<path d="M326.5 260.9l.8 -7.3" stroke="#35b85a" stroke-width="1.6" opacity=".8"/>
<circle cx="326.5" cy="260.9" r="3.3" fill="#0c34b0"/>
<path d="M443.8 266.8l.8 -7.3" stroke="#35b85a" stroke-width="1.6" opacity=".8"/>
<circle cx="443.8" cy="266.8" r="3.3" fill="#0c34b0"/>
<path d="M562.7 272.9l.8 -7.3" stroke="#35b85a" stroke-width="1.6" opacity=".8"/>
<circle cx="562.7" cy="272.9" r="3.3" fill="#0c34b0"/>
<path d="M619.2 275.8l.8 -7.3" stroke="#35b85a" stroke-width="1.6" opacity=".8"/>
<circle cx="619.2" cy="275.8" r="3.3" fill="#0c34b0"/>
<path d="M683.2 279l.8 -7.3" stroke="#35b85a" stroke-width="1.6" opacity=".8"/>
<circle cx="683.2" cy="279" r="3.3" fill="#0c34b0"/>
<path d="M746.8 282.3l.8 -7.3" stroke="#35b85a" stroke-width="1.6" opacity=".8"/>
<circle cx="746.8" cy="282.3" r="3.3" fill="#0c34b0"/>
<path d="M806.3 285.3l.8 -7.3" stroke="#35b85a" stroke-width="1.6" opacity=".8"/>
<circle cx="806.3" cy="285.3" r="3.3" fill="#0c34b0"/>
<path d="M928.3 291.5l.8 -7.3" stroke="#35b85a" stroke-width="1.6" opacity=".8"/>
<circle cx="928.3" cy="291.5" r="3.3" fill="#0c34b0"/>
<path d="M1053.5 297.9l.8 -7.3" stroke="#35b85a" stroke-width="1.6" opacity=".8"/>
<circle cx="1053.5" cy="297.9" r="3.3" fill="#0c34b0"/>
<path d="M1179.2 304.2l.8 -7.3" stroke="#35b85a" stroke-width="1.6" opacity=".8"/>
<circle cx="1179.2" cy="304.2" r="3.3" fill="#0c34b0"/>
<path d="M176.2 297l.8 -7.4" stroke="#35b85a" stroke-width="1.6" opacity=".8"/>
<circle cx="176.2" cy="297" r="3.4" fill="#0c34b0"/>
<path d="M296.7 303.4l.8 -7.4" stroke="#35b85a" stroke-width="1.6" opacity=".8"/>
<circle cx="296.7" cy="303.4" r="3.4" fill="#0c34b0"/>
<path d="M418.5 309.8l.8 -7.4" stroke="#35b85a" stroke-width="1.6" opacity=".8"/>
<circle cx="418.5" cy="309.8" r="3.4" fill="#0c34b0"/>
<path d="M542 316.3l.8 -7.4" stroke="#35b85a" stroke-width="1.6" opacity=".8"/>
<circle cx="542" cy="316.3" r="3.4" fill="#0c34b0"/>
<path d="M600.7 319.4l.8 -7.4" stroke="#35b85a" stroke-width="1.6" opacity=".8"/>
<circle cx="600.7" cy="319.4" r="3.4" fill="#0c34b0"/>
<path d="M667.4 323l.8 -7.4" stroke="#35b85a" stroke-width="1.6" opacity=".8"/>
<circle cx="667.4" cy="323" r="3.4" fill="#0c34b0"/>
<path d="M733.7 326.5l.8 -7.4" stroke="#35b85a" stroke-width="1.6" opacity=".8"/>
<circle cx="733.7" cy="326.5" r="3.4" fill="#0c34b0"/>
<path d="M795.1 329.7l.8 -7.4" stroke="#35b85a" stroke-width="1.6" opacity=".8"/>
<circle cx="795.1" cy="329.7" r="3.4" fill="#0c34b0"/>
<path d="M922.3 336.4l.8 -7.4" stroke="#35b85a" stroke-width="1.6" opacity=".8"/>
<circle cx="922.3" cy="336.4" r="3.4" fill="#0c34b0"/>
<path d="M1052.6 343.3l.8 -7.4" stroke="#35b85a" stroke-width="1.6" opacity=".8"/>
<circle cx="1052.6" cy="343.3" r="3.4" fill="#0c34b0"/>
<path d="M1183.8 350.2l.8 -7.4" stroke="#35b85a" stroke-width="1.6" opacity=".8"/>
<circle cx="1183.8" cy="350.2" r="3.4" fill="#0c34b0"/>
<path d="M156.4 321.3l.8 -7.5" stroke="#35b85a" stroke-width="1.6" opacity=".8"/>
<circle cx="156.4" cy="321.3" r="3.5" fill="#0c34b0"/>
<path d="M279.3 328l.8 -7.5" stroke="#35b85a" stroke-width="1.6" opacity=".8"/>
<circle cx="279.3" cy="328" r="3.5" fill="#0c34b0"/>
<path d="M403.7 334.8l.8 -7.5" stroke="#35b85a" stroke-width="1.6" opacity=".8"/>
<circle cx="403.7" cy="334.8" r="3.5" fill="#0c34b0"/>
<path d="M530 341.7l.8 -7.5" stroke="#35b85a" stroke-width="1.6" opacity=".8"/>
<circle cx="530" cy="341.7" r="3.5" fill="#0c34b0"/>
<path d="M589.8 345l.8 -7.5" stroke="#35b85a" stroke-width="1.6" opacity=".8"/>
<circle cx="589.8" cy="345" r="3.5" fill="#0c34b0"/>
<path d="M658.1 348.7l.8 -7.5" stroke="#35b85a" stroke-width="1.6" opacity=".8"/>
<circle cx="658.1" cy="348.7" r="3.5" fill="#0c34b0"/>
<path d="M726.1 352.4l.8 -7.5" stroke="#35b85a" stroke-width="1.6" opacity=".8"/>
<circle cx="726.1" cy="352.4" r="3.5" fill="#0c34b0"/>
<path d="M788.6 355.8l.8 -7.5" stroke="#35b85a" stroke-width="1.6" opacity=".8"/>
<circle cx="788.6" cy="355.8" r="3.5" fill="#0c34b0"/>
<path d="M918.8 362.9l.8 -7.5" stroke="#35b85a" stroke-width="1.6" opacity=".8"/>
<circle cx="918.8" cy="362.9" r="3.5" fill="#0c34b0"/>
<path d="M1052.1 370.2l.8 -7.5" stroke="#35b85a" stroke-width="1.6" opacity=".8"/>
<circle cx="1052.1" cy="370.2" r="3.5" fill="#0c34b0"/>
<path d="M1186.2 377.5l.8 -7.5" stroke="#35b85a" stroke-width="1.6" opacity=".8"/>
<circle cx="1186.2" cy="377.5" r="3.5" fill="#0c34b0"/>
<path d="M135 347.8l.8 -7.5" stroke="#35b85a" stroke-width="1.6" opacity=".8"/>
<circle cx="135" cy="347.8" r="3.5" fill="#0c34b0"/>
<path d="M260.6 354.7l.8 -7.5" stroke="#35b85a" stroke-width="1.6" opacity=".8"/>
<circle cx="260.6" cy="354.7" r="3.5" fill="#0c34b0"/>
<path d="M387.9 361.7l.8 -7.5" stroke="#35b85a" stroke-width="1.6" opacity=".8"/>
<circle cx="387.9" cy="361.7" r="3.5" fill="#0c34b0"/>
<path d="M517.2 368.8l.8 -7.5" stroke="#35b85a" stroke-width="1.6" opacity=".8"/>
<circle cx="517.2" cy="368.8" r="3.5" fill="#0c34b0"/>
<path d="M578.3 372.2l.8 -7.5" stroke="#35b85a" stroke-width="1.6" opacity=".8"/>
<circle cx="578.3" cy="372.2" r="3.5" fill="#0c34b0"/>
<path d="M648.3 376l.8 -7.5" stroke="#35b85a" stroke-width="1.6" opacity=".8"/>
<circle cx="648.3" cy="376" r="3.5" fill="#0c34b0"/>
<path d="M718 379.8l.8 -7.5" stroke="#35b85a" stroke-width="1.6" opacity=".8"/>
<circle cx="718" cy="379.8" r="3.5" fill="#0c34b0"/>
<path d="M781.6 383.3l.8 -7.5" stroke="#35b85a" stroke-width="1.6" opacity=".8"/>
<circle cx="781.6" cy="383.3" r="3.5" fill="#0c34b0"/>
<path d="M915.2 390.7l.8 -7.5" stroke="#35b85a" stroke-width="1.6" opacity=".8"/>
<circle cx="915.2" cy="390.7" r="3.5" fill="#0c34b0"/>
<path d="M1051.6 398.2l.8 -7.5" stroke="#35b85a" stroke-width="1.6" opacity=".8"/>
<circle cx="1051.6" cy="398.2" r="3.5" fill="#0c34b0"/>
<path d="M1189.5 405.8l.8 -7.5" stroke="#35b85a" stroke-width="1.6" opacity=".8"/>
<circle cx="1189.5" cy="405.8" r="3.5" fill="#0c34b0"/>
<path d="M93.8 397l.8 -7.6" stroke="#35b85a" stroke-width="1.6" opacity=".8"/>
<circle cx="93.8" cy="397" r="3.6" fill="#0c34b0"/>
<path d="M225.4 404.7l.8 -7.6" stroke="#35b85a" stroke-width="1.6" opacity=".8"/>
<circle cx="225.4" cy="404.7" r="3.6" fill="#0c34b0"/>
<path d="M358 412.4l.8 -7.6" stroke="#35b85a" stroke-width="1.6" opacity=".8"/>
<circle cx="358" cy="412.4" r="3.6" fill="#0c34b0"/>
<path d="M492.7 420.3l.8 -7.6" stroke="#35b85a" stroke-width="1.6" opacity=".8"/>
<circle cx="492.7" cy="420.3" r="3.6" fill="#0c34b0"/>
<path d="M556.3 424l.8 -7.6" stroke="#35b85a" stroke-width="1.6" opacity=".8"/>
<circle cx="556.3" cy="424" r="3.6" fill="#0c34b0"/>
<path d="M629.5 428.3l.8 -7.6" stroke="#35b85a" stroke-width="1.6" opacity=".8"/>
<circle cx="629.5" cy="428.3" r="3.6" fill="#0c34b0"/>
<path d="M702.5 432.5l.8 -7.6" stroke="#35b85a" stroke-width="1.6" opacity=".8"/>
<circle cx="702.5" cy="432.5" r="3.6" fill="#0c34b0"/>
<path d="M768.2 436.4l.8 -7.6" stroke="#35b85a" stroke-width="1.6" opacity=".8"/>
<circle cx="768.2" cy="436.4" r="3.6" fill="#0c34b0"/>
<path d="M908 444.5l.8 -7.6" stroke="#35b85a" stroke-width="1.6" opacity=".8"/>
<circle cx="908" cy="444.5" r="3.6" fill="#0c34b0"/>
<path d="M1050.6 452.9l.8 -7.6" stroke="#35b85a" stroke-width="1.6" opacity=".8"/>
<circle cx="1050.6" cy="452.9" r="3.6" fill="#0c34b0"/>
<path d="M1194.2 461.2l.8 -7.6" stroke="#35b85a" stroke-width="1.6" opacity=".8"/>
<circle cx="1194.2" cy="461.2" r="3.6" fill="#0c34b0"/>
<path d="M47.4 453.2l.8 -7.7" stroke="#35b85a" stroke-width="1.6" opacity=".8"/>
<circle cx="47.4" cy="453.2" r="3.7" fill="#0a6a48"/>
<path d="M185.2 461.8l.8 -7.7" stroke="#35b85a" stroke-width="1.6" opacity=".8"/>
<circle cx="185.2" cy="461.8" r="3.7" fill="#0c34b0"/>
<path d="M323.8 470.5l.8 -7.7" stroke="#35b85a" stroke-width="1.6" opacity=".8"/>
<circle cx="323.8" cy="470.5" r="3.7" fill="#0c34b0"/>
<path d="M465 478.8l.8 -7.7" stroke="#35b85a" stroke-width="1.6" opacity=".8"/>
<circle cx="465" cy="478.8" r="3.7" fill="#0c34b0"/>
<path d="M531 483.8l.8 -7.7" stroke="#35b85a" stroke-width="1.6" opacity=".8"/>
<circle cx="531" cy="483.8" r="3.7" fill="#0c34b0"/>
<path d="M608 488l.8 -7.7" stroke="#35b85a" stroke-width="1.6" opacity=".8"/>
<circle cx="608" cy="488" r="3.7" fill="#0c34b0"/>
<path d="M685 492l.8 -7.7" stroke="#35b85a" stroke-width="1.6" opacity=".8"/>
<circle cx="685" cy="492" r="3.7" fill="#0c34b0"/>
<path d="M753 496.8l.8 -7.7" stroke="#35b85a" stroke-width="1.6" opacity=".8"/>
<circle cx="753" cy="496.8" r="3.7" fill="#0c34b0"/>
<path d="M900 505.5l.8 -7.7" stroke="#35b85a" stroke-width="1.6" opacity=".8"/>
<circle cx="900" cy="505.5" r="3.7" fill="#0c34b0"/>
<path d="M1049.5 515l.8 -7.7" stroke="#35b85a" stroke-width="1.6" opacity=".8"/>
<circle cx="1049.5" cy="515" r="3.7" fill="#0c34b0"/>
<path d="M1200.5 523.8l.8 -7.7" stroke="#35b85a" stroke-width="1.6" opacity=".8"/>
<circle cx="1200.5" cy="523.8" r="3.7" fill="#0a6a48"/>
</g>
<g id="box">
<polygon points="600,245 736.5,252.5 733.7,326.5 600.7,319.4" fill="#e03c20" opacity=".55"/>
<polygon points="577.5,295.5 600,245 600.7,319.4 578.3,372.2" fill="#e03c20" opacity=".35"/>
<polygon points="577.5,295.5 600,245 736.5,252.5 719.5,303" fill="#ea4428" opacity=".8"/>
<polygon points="719.5,303 736.5,252.5 733.7,326.5 718,379.8" fill="#e24428" opacity=".82"/>
<polygon points="577.5,295.5 719.5,303 718,379.8 578.3,372.2" fill="#fc4c28" opacity=".88"/>
<g stroke="#b83018" stroke-width="1" fill="none" opacity=".7">
<path d="M577.5 295.5L719.5 303"/>
<path d="M577.5 295.5L600 245"/>
<path d="M600 245L736.5 252.5"/>
<path d="M736.5 252.5L719.5 303"/>
<path d="M577.5 295.5L578.3 372.2"/>
<path d="M719.5 303L718 379.8"/>
<path d="M736.5 252.5L733.7 326.5"/>
<path d="M600 245L600.7 319.4"/>
<path d="M649 299L668 248.5"/>
<path d="M589 269.5L729 276.5"/>
<path d="M649 299L648.3 376"/>
<path d="M729 276.5L726.1 352.4"/>
<path d="M668 248.5L667.4 323"/>
<path d="M589 269.5L589.8 345"/>
<path d="M600.7 319.4L733.7 326.5"/>
<path d="M589.8 345L726.1 352.4"/>
</g>
<g font-family="'Liberation Sans',sans-serif" font-size="10" fill="#8e2a18" opacity=".8" text-anchor="middle">
<text x="629" y="298">Brazo Rigido</text>
<text x="697.3" y="301">Brazo Rigido</text>
<text x="618.5" y="323.5">Brazo Rigido</text>
<text x="688" y="327.2">Brazo Rigido</text>
</g>
<circle cx="578.3" cy="372.2" r="3" fill="#3a209a" opacity=".8"/>
<circle cx="648.3" cy="376" r="3" fill="#3a209a" opacity=".8"/>
<circle cx="718" cy="379.8" r="3" fill="#3a209a" opacity=".8"/>
<circle cx="726.1" cy="352.4" r="3" fill="#3a209a" opacity=".8"/>
<circle cx="733.7" cy="326.5" r="3" fill="#3a209a" opacity=".8"/>
<circle cx="577.5" cy="295.5" r="3.3" fill="#3838e0"/>
<circle cx="719.5" cy="303" r="3.3" fill="#3838e0"/>
<circle cx="600" cy="245" r="3.3" fill="#3838e0"/>
<circle cx="736.5" cy="252.5" r="3.3" fill="#3838e0"/>
<circle cx="649" cy="299" r="3.3" fill="#3838e0"/>
<circle cx="668" cy="248.5" r="3.3" fill="#3838e0"/>
<circle cx="589" cy="269.5" r="3.3" fill="#3838e0"/>
<circle cx="729" cy="276.5" r="3.3" fill="#3838e0"/>
<circle cx="659" cy="273" r="3.3" fill="#3838e0"/>
</g>
<path d="M1167.5 368.7v9.6l2.4-2 1.6 3.4 1.7-.8-1.6-3.3 3.4-.2z" fill="#ee4a9c" stroke="#b82e70" stroke-width=".7"/>
</svg>
<div class="abs" id="legend" style="left:1259.3px;top:160px;width:14px;height:427px;overflow:hidden">
<div class="abs" style="left:0;top:0px;width:14px;height:28.5px;background:#7a84ee;border-bottom:1px solid #5868d8;border-left:1px solid #5868d8;border-right:1px solid #5868d8"></div>
<div class="abs" style="left:0;top:28.5px;width:14px;height:28.5px;background:#72a0f6;border-bottom:1px solid #4c84e0;border-left:1px solid #4c84e0;border-right:1px solid #4c84e0"></div>
<div class="abs" style="left:0;top:56.9px;width:14px;height:28.5px;background:#6cb8f6;border-bottom:1px solid #48a0e4;border-left:1px solid #48a0e4;border-right:1px solid #48a0e4"></div>
<div class="abs" style="left:0;top:85.4px;width:14px;height:28.5px;background:#6cdcfa;border-bottom:1px solid #48c0d8;border-left:1px solid #48c0d8;border-right:1px solid #48c0d8"></div>
<div class="abs" style="left:0;top:113.9px;width:14px;height:28.5px;background:#70d4b4;border-bottom:1px solid #48bc90;border-left:1px solid #48bc90;border-right:1px solid #48bc90"></div>
<div class="abs" style="left:0;top:142.3px;width:14px;height:28.5px;background:#68c86c;border-bottom:1px solid #48b048;border-left:1px solid #48b048;border-right:1px solid #48b048"></div>
<div class="abs" style="left:0;top:170.8px;width:14px;height:28.5px;background:#acd868;border-bottom:1px solid #90c048;border-left:1px solid #90c048;border-right:1px solid #90c048"></div>
<div class="abs" style="left:0;top:199.3px;width:14px;height:28.5px;background:#fce868;border-bottom:1px solid #f0d040;border-left:1px solid #f0d040;border-right:1px solid #f0d040"></div>
<div class="abs" style="left:0;top:227.8px;width:14px;height:28.5px;background:#fcd868;border-bottom:1px solid #f0c040;border-left:1px solid #f0c040;border-right:1px solid #f0c040"></div>
<div class="abs" style="left:0;top:256.2px;width:14px;height:28.5px;background:#fcc468;border-bottom:1px solid #f0a848;border-left:1px solid #f0a848;border-right:1px solid #f0a848"></div>
<div class="abs" style="left:0;top:284.7px;width:14px;height:28.5px;background:#fcb068;border-bottom:1px solid #f09048;border-left:1px solid #f09048;border-right:1px solid #f09048"></div>
<div class="abs" style="left:0;top:313.2px;width:14px;height:28.5px;background:#fc9c70;border-bottom:1px solid #f07850;border-left:1px solid #f07850;border-right:1px solid #f07850"></div>
<div class="abs" style="left:0;top:341.6px;width:14px;height:28.5px;background:#fc8c78;border-bottom:1px solid #f05858;border-left:1px solid #f05858;border-right:1px solid #f05858"></div>
<div class="abs" style="left:0;top:370.1px;width:14px;height:28.5px;background:#fc8cb4;border-bottom:1px solid #e868a0;border-left:1px solid #e868a0;border-right:1px solid #e868a0"></div>
<div class="abs" style="left:0;top:398.6px;width:14px;height:28.5px;background:#ec94ec;border-bottom:1px solid #d070d0;border-left:1px solid #d070d0;border-right:1px solid #d070d0"></div>
</div>
<div class="t" style="right:22px;top:183.5px;font-size:9px;color:#3c3c3c">-11.</div>
<div class="t" style="right:22px;top:212px;font-size:9px;color:#3c3c3c">-11.5</div>
<div class="t" style="right:22px;top:240.4px;font-size:9px;color:#3c3c3c">-12.</div>
<div class="t" style="right:22px;top:268.9px;font-size:9px;color:#3c3c3c">-12.5</div>
<div class="t" style="right:22px;top:297.4px;font-size:9px;color:#3c3c3c">-13.</div>
<div class="t" style="right:22px;top:325.8px;font-size:9px;color:#3c3c3c">-13.5</div>
<div class="t" style="right:22px;top:354.3px;font-size:9px;color:#3c3c3c">-14.</div>
<div class="t" style="right:22px;top:382.8px;font-size:9px;color:#3c3c3c">-14.5</div>
<div class="t" style="right:22px;top:411.3px;font-size:9px;color:#3c3c3c">-15.</div>
<div class="t" style="right:22px;top:439.7px;font-size:9px;color:#3c3c3c">-15.5</div>
<div class="t" style="right:22px;top:468.2px;font-size:9px;color:#3c3c3c">-16.</div>
<div class="t" style="right:22px;top:496.7px;font-size:9px;color:#3c3c3c">-16.5</div>
<div class="t" style="right:22px;top:525.1px;font-size:9px;color:#3c3c3c">-17.</div>
<div class="t" style="right:22px;top:553.6px;font-size:9px;color:#3c3c3c">-17.5</div>
<div class="abs" style="left:1279px;top:68px;width:1px;height:611px;background:#b4b4b8"></div>
<div class="abs" id="title"></div><div class="abs" id="menu"></div><div class="abs" id="tool"></div><div class="abs" id="tabs"></div><div class="abs" id="left"></div><div class="abs" id="tab"></div>
<div class="t" style="left:15.60px;top:4.00px;font-size:8.5px;color:#2a2a2a;transform:scaleX(0.910);transform-origin:0 0;">SAP2000 v20.2.0 Ultimate 64-bit - Modelo Zapata Aislada MARIO</div>
<div class="t" style="left:11.50px;top:21.00px;font-size:8.2px;color:#2a2a2a;transform:scaleX(0.886);transform-origin:0 0;">File</div>
<div class="t" style="left:36.30px;top:21.00px;font-size:8.2px;color:#2a2a2a;transform:scaleX(0.900);transform-origin:0 0;">Edit</div>
<div class="t" style="left:62.00px;top:21.00px;font-size:8.2px;color:#2a2a2a;transform:scaleX(0.948);transform-origin:0 0;">View</div>
<div class="t" style="left:91.70px;top:21.00px;font-size:8.2px;color:#2a2a2a;transform:scaleX(0.929);transform-origin:0 0;">Define</div>
<div class="t" style="left:127.00px;top:21.00px;font-size:8.2px;color:#2a2a2a;transform:scaleX(0.916);transform-origin:0 0;">Draw</div>
<div class="t" style="left:157.50px;top:21.00px;font-size:8.2px;color:#2a2a2a;transform:scaleX(0.900);transform-origin:0 0;">Select</div>
<div class="t" style="left:191.20px;top:21.00px;font-size:8.2px;color:#2a2a2a;transform:scaleX(0.915);transform-origin:0 0;">Assign</div>
<div class="t" style="left:227.00px;top:21.00px;font-size:8.2px;color:#2a2a2a;transform:scaleX(0.916);transform-origin:0 0;">Analyze</div>
<div class="t" style="left:267.00px;top:21.00px;font-size:8.2px;color:#2a2a2a;transform:scaleX(0.920);transform-origin:0 0;">Display</div>
<div class="t" style="left:304.50px;top:21.00px;font-size:8.2px;color:#2a2a2a;transform:scaleX(0.941);transform-origin:0 0;">Design</div>
<div class="t" style="left:341.50px;top:21.00px;font-size:8.2px;color:#2a2a2a;transform:scaleX(0.992);transform-origin:0 0;">Options</div>
<div class="t" style="left:382.50px;top:21.00px;font-size:8.2px;color:#2a2a2a;transform:scaleX(0.915);transform-origin:0 0;">Tools</div>
<div class="t" style="left:412.50px;top:21.00px;font-size:8.2px;color:#2a2a2a;transform:scaleX(0.980);transform-origin:0 0;">Help</div>
<div class="t" style="left:54.20px;top:58.00px;font-size:8.2px;color:#1c2638;transform:scaleX(0.889);transform-origin:0 0;">Soil Pressure</div>
<div class="t" style="left:108.20px;top:58.00px;font-size:8.2px;color:#1c2638;transform:scaleX(0.920);transform-origin:0 0;">(Servicio)</div>
<svg width="1280" height="70" viewBox="0 0 1280 70" style="position:absolute;left:0;top:0" fill="none">
<g transform="translate(1.4 2.1)"><path d="M0 0Q5.2 1.352 10.4 0Q9.048 5.2 10.4 10.4Q5.2 9.048 0 10.4Q1.352 5.2 0 0Z" fill="#f8ae36"/><circle cx="5.2" cy="5.2" r="3.7439999999999998" fill="#f39a22"/><path d="M0.624 0.624L9.776 9.776M9.776 0.624L0.624 9.776" stroke="#fbd48a" stroke-width="0.7280000000000001"/><rect x="2.70" y="2.70" width="2.08" height="2.08" fill="#e2570e"/><rect x="2.70" y="5.62" width="2.08" height="2.08" fill="#e2570e"/><rect x="5.62" y="2.70" width="2.08" height="2.08" fill="#e2570e"/><rect x="5.62" y="5.62" width="2.08" height="2.08" fill="#e2570e"/></g>
<g transform="translate(33 55.7)"><path d="M0 0Q5.15 1.3390000000000002 10.3 0Q8.961 5.15 10.3 10.3Q5.15 8.961 0 10.3Q1.3390000000000002 5.15 0 0Z" fill="#f8ae36"/><circle cx="5.15" cy="5.15" r="3.708" fill="#f39a22"/><path d="M0.618 0.618L9.682 9.682M9.682 0.618L0.618 9.682" stroke="#fbd48a" stroke-width="0.7210000000000001"/><rect x="2.68" y="2.68" width="2.06" height="2.06" fill="#e2570e"/><rect x="2.68" y="5.56" width="2.06" height="2.06" fill="#e2570e"/><rect x="5.56" y="2.68" width="2.06" height="2.06" fill="#e2570e"/><rect x="5.56" y="5.56" width="2.06" height="2.06" fill="#e2570e"/></g>
<path d="M1199.5 7.5h7" stroke="#8a8a8a" stroke-width="1"/>
<path d="M1229.5 5.5h5.5v5.5h-5.5zM1231.5 5.5v-1.7h5.5v5.5h-2" stroke="#555" stroke-width="1"/>
<path d="M1260 4l6.5 6.5M1266.5 4l-6.5 6.5" stroke="#444" stroke-width="1.1"/>
<path d="M1267 19.5h4v4h2.6l-4.6 4.6-4.6-4.6h2.6z" fill="#4a5060"/><path d="M1263.7 29.5h10.6" stroke="#4a5060" stroke-width="1.4"/>
<path d="M1256.2 60h4.6l-2.3 2.6z" fill="#222"/>
<path d="M1267.5 58l5 5M1272.5 58l-5 5" stroke="#222" stroke-width="1.2"/>
<path d="M2.5 36V50" stroke="#a8a8b0" stroke-width="1.2" stroke-dasharray="1 1.4"/>
<path d="M11.5 37.5h5.5l3 3v7h-8.5z" fill="#fafafc" stroke="#8a8c96" stroke-width="1"/><path d="M17 37.5v3h3" stroke="#8a8c96" stroke-width="1"/>
<path d="M25 40l5.5-4 7 7.5-5 4.5z" fill="#3c4874"/><path d="M32.5 48l5-4.5v-2.5l-5 4.5z" fill="#b8c4dc"/><path d="M25 40v2.2l7.5 5.8v-2.5z" fill="#5a6890"/>
<path d="M42 36V50" stroke="#cfcfd4" stroke-width="1"/>
<path d="M46.5 37h10.5v10.5h-10.5z" fill="#343f6c"/><path d="M48.5 37h6v4h-6z" fill="#e8ecf4"/><path d="M48.2 43.2h7.2v4.3h-7.2z" fill="#9cb4d8"/>
<path d="M64 37h6l1.5 2v2.500h-7.500z" fill="#f0f2f6" stroke="#6a7088" stroke-width=".9"/><path d="M61.500 41.500h12.500v5.500h-12.500z" fill="#6a7496"/><path d="M64.500 44h9.500v5h-9.500z" fill="#3e4870"/><path d="M66 45.500h2.500v2.200h-2.500zM70 45.500h2.500v2.200h-2.500z" fill="#c8d0e0"/>
<path d="M77.5 36V50" stroke="#cfcfd4" stroke-width="1"/>
<path d="M84.500 43.500a3.800 3.800 0 1 1 5.500 2.800" stroke="#a4a6b0" stroke-width="2.200"/><path d="M82 41.500l4.800-.3-1.200 4.600z" fill="#a4a6b0"/>
<path d="M106.500 43.800a3.600 3.600 0 1 0-5.300 2.500" stroke="#a4a6b0" stroke-width="2.200"/><path d="M109 42l-4.800-.3 1.200 4.600z" fill="#a4a6b0"/>
<path d="M113 36V50" stroke="#cfcfd4" stroke-width="1"/>
<path d="M118 48.500l1.200-3.600 7.600-7.400a1.600 1.600 0 0 1 2.400 2.400l-7.600 7.400z" fill="#3a4058"/><path d="M126 38.500l2 2" stroke="#c8ccd8" stroke-width="1"/>
<rect x="135.500" y="34.500" width="16" height="16" fill="#dde9f7" stroke="#8fb4e0" stroke-width="1"/>
<path d="M141.300 42.500v-2.200a2.600 2.600 0 0 1 5.200 0v2.200" stroke="#2a3050" stroke-width="1.500"/><rect x="139.300" y="42" width="9.200" height="5.600" fill="#2a3050"/>
<path d="M154.5 36V50" stroke="#cfcfd4" stroke-width="1"/>
<path d="M160.500 38.500l5.500 4.200-5.500 4.200z" fill="#3c3e4a"/>
<circle cx="179.400" cy="42.700" r="5.300" stroke="#3c3e4a" stroke-width="1.300" stroke-dasharray="5 1.600"/><path d="M177.600 39.900l4.200 2.800-4.200 2.800z" fill="#3c3e4a"/>
<path d="M189.5 36V50" stroke="#cfcfd4" stroke-width="1"/>
<circle cx="198.4" cy="42.300000000000004" r="3.5" fill="#f4f4f8" stroke="#3c3e4a" stroke-width="1.4"/><path d="M201.10000000000002 45.1l3 3" stroke="#3c3e4a" stroke-width="2" stroke-linecap="round"/>
<rect x="196.1" y="40.0" width="4.600" height="4.600" stroke="#3c3e4a" stroke-width="1"/>
<circle cx="214.6" cy="42.300000000000004" r="3.5" fill="#f4f4f8" stroke="#3c3e4a" stroke-width="1.4"/><path d="M217.3 45.1l3 3" stroke="#3c3e4a" stroke-width="2" stroke-linecap="round"/>
<circle cx="214.6" cy="42.3" r="2" fill="#3c3e4a"/>
<circle cx="230.79999999999998" cy="42.300000000000004" r="3.5" fill="#f4f4f8" stroke="#3c3e4a" stroke-width="1.4"/><path d="M233.5 45.1l3 3" stroke="#3c3e4a" stroke-width="2" stroke-linecap="round"/>
<path d="M233.1 42.3h-4.200m1.800-1.800l-1.800 1.800 1.800 1.800" stroke="#3c3e4a" stroke-width="1.100"/>
<circle cx="246.6" cy="42.300000000000004" r="3.5" fill="#f4f4f8" stroke="#3c3e4a" stroke-width="1.4"/><path d="M249.3 45.1l3 3" stroke="#3c3e4a" stroke-width="2" stroke-linecap="round"/>
<path d="M244.2 42.3h4.800M246.6 39.9v4.800" stroke="#3c3e4a" stroke-width="1.100"/>
<circle cx="262.6" cy="42.300000000000004" r="3.5" fill="#f4f4f8" stroke="#3c3e4a" stroke-width="1.4"/><path d="M265.3 45.1l3 3" stroke="#3c3e4a" stroke-width="2" stroke-linecap="round"/>
<path d="M260.20000000000005 42.3h4.800" stroke="#3c3e4a" stroke-width="1.100"/>
<path d="M273 36V50" stroke="#cfcfd4" stroke-width="1"/>
<path d="M279 42.500l-1.500-1.500 0-1.200 1.200 0 1.300 1.200v-3.200l1.300-.3.500 2.500.3-3.300 1.400 0 .2 3.300.6-2.800 1.300.3-.2 3 .9-1.800 1.100.5-1 4.500-1.200 3.300h-4.700z" fill="#4a5068"/>
<ellipse cx="296.300" cy="39.500" rx="1.500" ry="2.300" fill="#b4b6c0"/><rect x="295" y="42.500" width="2.600" height="1.600" fill="#b4b6c0"/><ellipse cx="301.800" cy="44" rx="1.500" ry="2.300" fill="#b4b6c0"/><rect x="300.500" y="47" width="2.600" height="1.600" fill="#b4b6c0"/>
<path d="M309.5 36V50" stroke="#cfcfd4" stroke-width="1"/>
<path d="M397.500 39.800a3.700 3.700 0 1 1 0 6.200" stroke="#2c2e38" stroke-width="1.700"/><path d="M396 38l3.800.6-2.300 3z" fill="#2c2e38"/>
<circle cx="411.800" cy="45" r="2.500" stroke="#2c2e38" stroke-width="1.300"/><circle cx="418.500" cy="45" r="2.500" stroke="#2c2e38" stroke-width="1.300"/><path d="M414.300 45h1.700M410.500 42.700l6-4.500M421 45v-7" stroke="#2c2e38" stroke-width="1.200"/>
<path d="M425.5 36V50" stroke="#cfcfd4" stroke-width="1"/>
<path d="M435.500 37l5.500 5.500h-3v2.500h-5v-2.500h-3z" fill="#c2c4cc"/><path d="M433 46h5v1.800h-5z" fill="#c2c4cc"/>
<path d="M451.700 48.500l5.500-5.500h-3v-2.500h-5v2.500h-3z" fill="#c2c4cc"/><path d="M449.200 37.500h5v1.800h-5z" fill="#c2c4cc"/>
<path d="M461.5 36V50" stroke="#cfcfd4" stroke-width="1"/>
<rect x="465.500" y="38" width="4.500" height="4.500" fill="#9aa2bc" stroke="#4a5272" stroke-width="1"/><rect x="472" y="44.500" width="4.500" height="4" fill="#4a5272"/><path d="M472.500 38.500h3.500v3.500M476 38.500l-3.500 3.500M466.500 45.500l3.500 3.500M470 45.500v3.500h-3.500" stroke="#4a5272" stroke-width="1.100"/>
<rect x="482.500" y="38" width="10" height="9.500" fill="#e6eaf4" stroke="#5a6284" stroke-width="1.300"/><path d="M484.800 42.500l2.200 2.500 3.800-4.800" stroke="#2a3050" stroke-width="1.500"/>
<path d="M497.5 36V50" stroke="#cfcfd4" stroke-width="1"/>
<rect x="502.500" y="38" width="9.500" height="9" fill="#d4d6dc" stroke="#c0c2ca" stroke-width="1"/><path d="M503.500 46l7.500-7" stroke="#b0b2bc" stroke-width="1.200"/><circle cx="511.500" cy="37.500" r="1.500" fill="#c0c2ca"/>
<path d="M517.1 41.5h4.6l-2.3 2.6z" fill="#222"/>
<path d="M575.5 36V50" stroke="#a8a8b0" stroke-width="1.2" stroke-dasharray="1 1.4"/>
<path d="M584.500 47.500v-9h8v9" stroke="#22242c" stroke-width="1.400"/>
<path d="M600 47.500v-8h9.500v8M600 36.500l1.500 2.500M603.500 36.500v2.500M607.500 36.500l2 2" stroke="#22242c" stroke-width="1.400"/>
<path d="M616.500 47.500v-9.500l3 3h5l2.500-3v9.500M616.500 39.500l-1.300-1.800" stroke="#22242c" stroke-width="1.400"/>
<path d="M628.2 42.5h4.6l-2.3 2.6z" fill="#222"/>
<path d="M653 36V50" stroke="#cfcfd4" stroke-width="1"/>
<path d="M656.7 41.5h4.6l-2.3 2.6z" fill="#222"/>
<path d="M667 36V50" stroke="#a8a8b0" stroke-width="1.2" stroke-dasharray="1 1.4"/>
<path d="M676.500 38.500h7M676.500 47h7M680 38.500v8.500" stroke="#22242c" stroke-width="1.700"/>
<path d="M690.1 41.5h4.6l-2.3 2.6z" fill="#222"/>
<path d="M698.5 36V50" stroke="#cfcfd4" stroke-width="1"/>
<rect x="703.500" y="38.200" width="9" height="9.300" fill="#b4b6be" stroke="#2c2e38" stroke-width="1.300"/>
<path d="M717.9000000000001 41.5h4.6l-2.3 2.6z" fill="#222"/>
<path d="M726 36V50" stroke="#cfcfd4" stroke-width="1"/>
<path d="M730.1 41.5h4.6l-2.3 2.6z" fill="#222"/>
<path d="M738 36V50" stroke="#cfcfd4" stroke-width="1"/>
</svg>
<div class="t" style="left:313.20px;top:39.00px;font-size:8.6px;color:#555;transform:scaleX(0.966);transform-origin:0 0;">3-d</div>
<div class="t" style="left:330.60px;top:38.00px;font-size:9.4px;color:#1a1a1a;font-weight:bold;transform:scaleX(0.958);transform-origin:0 0;">xy</div>
<div class="t" style="left:346.50px;top:38.00px;font-size:9.4px;color:#1a1a1a;font-weight:bold;transform:scaleX(1.009);transform-origin:0 0;">xz</div>
<div class="t" style="left:363.00px;top:38.00px;font-size:9.4px;color:#1a1a1a;font-weight:bold;transform:scaleX(0.989);transform-origin:0 0;">yz</div>
<div class="t" style="left:378.80px;top:39.00px;font-size:9px;color:#adadb2;transform:scaleX(0.967);transform-origin:0 0;">nv</div>
<div class="t" style="left:637.80px;top:39.00px;font-size:8.6px;color:#b4b4ba;font-weight:bold;transform:scaleX(0.933);transform-origin:0 0;">nd</div>
<svg width="20" height="640" viewBox="0 50 20 640" style="position:absolute;left:0;top:50px" fill="none">
<path d="M3 55.500H16" stroke="#a8a8b0" stroke-width="1.200" stroke-dasharray="1 1.400"/>
<rect x="2.500" y="61.500" width="13" height="16" fill="#e2ecf8" stroke="#8fb4e0"/>
<path d="M6.500 63.500v10l2.500-2.300 1.700 3.800 1.500-.7-1.700-3.700h3.200z" fill="#2c3040"/>
<path d="M7 83.7v8l2-1.800 1.300 3 1.200-.5-1.300-3h2.500z" fill="#b4b6c0"/><path d="M4 82.7h10M9 80.2v5" stroke="#b4b6c0"/>
<rect x="4" y="100" width="10" height="10" stroke="#b4b6c0"/><circle cx="9" cy="105" r="1" fill="#b4b6c0"/>
<path d="M5 118.4L13 128.4" stroke="#b4b6c0" stroke-width="1.300"/>
<rect x="4" y="136" width="10" height="10" stroke="#b4b6c0" stroke-dasharray="2 1"/><path d="M4 136L14 146" stroke="#b4b6c0" stroke-width="1.300"/>
<path d="M4 154L14 164M14 154L4 164" stroke="#b4b6c0" stroke-width="1.300"/><path d="M4 154V164M14 154V164" stroke="#b4b6c0"/>
<rect x="4.500" y="171.5" width="9" height="11" stroke="#b4b6c0" stroke-width="1.300" stroke-dasharray="2 1"/><circle cx="9" cy="177" r="1" fill="#b4b6c0"/>
<path d="M5 190h5l3.500 3.500v6.500h-8.500z" fill="#d8dae0" stroke="#b4b6c0"/>
<rect x="4.500" y="209.1" width="9" height="9" fill="#c8cad2" stroke="#b4b6c0"/>
<rect x="4.500" y="225.8" width="9" height="11" fill="#d0d2d8" stroke="#b4b6c0" stroke-dasharray="2 1"/>
<path d="M9.500 242.500h4l-2 2.400z" fill="#222"/>
<path d="M3 264H16" stroke="#a8a8b0" stroke-width="1.200" stroke-dasharray="1 1.400"/>
<rect x="2.500" y="270.500" width="13" height="15.500" fill="#e2ecf8" stroke="#8fb4e0"/>
<path d="M3.500 279h9M8 272.5v11" stroke="#50566a" stroke-width=".9"/><circle cx="8" cy="279" r="1.300" fill="#fff" stroke="#50566a" stroke-width=".8"/><circle cx="12" cy="273.5" r="1" stroke="#50566a" stroke-width=".7"/><path d="M11 279l2.800-1.800v3.600z" fill="#3a3e50"/>
<path d="M4 300.5L12.500 291" stroke="#50566a" stroke-width=".9"/><circle cx="4.500" cy="300" r="1.200" fill="#fff" stroke="#50566a" stroke-width=".8"/><circle cx="8" cy="296" r="1.200" fill="#fff" stroke="#50566a" stroke-width=".8"/><circle cx="12" cy="291.5" r="1.200" fill="#fff" stroke="#50566a" stroke-width=".8"/><path d="M10.500 296.5l2.800-1.800v3.600z" fill="#3a3e50"/>
<path d="M4 308.6L13 318.6M13 308.6L4 318.6" stroke="#50566a" stroke-width=".9"/><path d="M10 313.6l3-1.800v3.600z" fill="#3a3e50"/>
<path d="M3.500 332h9M8 326.5v11" stroke="#50566a" stroke-width=".9"/><path d="M10.500 332l3-1.800v3.600z" fill="#3a3e50"/>
<path d="M4.500 344.4L12.500 355.4" stroke="#50566a" stroke-width="1"/><circle cx="6" cy="346.4" r="1.200" fill="#fff" stroke="#50566a" stroke-width=".8"/><path d="M9.500 346.4l3-1.800v3.600z" fill="#3a3e50"/>
<path d="M4 363.2h10M4 366.2h10M4 369.2h10M4 372.2h10" stroke="#9a9ca8" stroke-width="1.300" stroke-dasharray="1.500 1"/><path d="M10.500 368.7l3-1.800v3.600z" fill="#3a3e50"/>
<path d="M9.500 379.500h4l-2 2.400z" fill="#222"/>
<path d="M3 385.500H16" stroke="#a8a8b0" stroke-width="1.200" stroke-dasharray="1 1.400"/>
<path d="M10.500 393v6.500l1.500-1.400 1 2.200.9-.4-1-2.200h1.900z" fill="#3a3e50"/>
<path d="M10.500 410.6v6.500l1.500-1.400 1 2.200.9-.4-1-2.200h1.900z" fill="#3a3e50"/>
<path d="M10.500 428v6.500l1.500-1.400 1 2.200.9-.4-1-2.200h1.900z" fill="#b4b6c0"/>
<path d="M10.500 445v6.500l1.500-1.400 1 2.200.9-.4-1-2.200h1.900z" fill="#3a3e50"/>
<path d="M4 457.500L12 447" stroke="#3a3e50" stroke-width="1.500"/>
<path d="M9.500 463.500h4l-2 2.400z" fill="#222"/>
</svg>
<div class="t" style="left:3px;top:397.500px;font-size:7px;color:#333">all</div>
<div class="t" style="left:2.500px;top:415.500px;font-size:6.500px;color:#333">PS</div>
<div class="t" style="left:3px;top:432.500px;font-size:7px;color:#b0b0b8">clr</div>
<div class="abs" id="status"></div>
<div class="t" style="left:11.60px;top:684.00px;font-size:7.8px;color:#222;transform:scaleX(0.883);transform-origin:0 0;">3-D View</div>
<div class="abs" style="left:1109px;top:680px;width:23px;height:13px;background:#e4e4e8;border:1px solid #c4c4ca"></div>
<div class="abs" style="left:1133px;top:680px;width:23px;height:13px;background:#e4e4e8;border:1px solid #c4c4ca"></div>
<div class="abs" style="left:1156px;top:680px;width:68px;height:13px;background:#ececf0;border:1px solid #c4c4ca"></div>
<div class="abs" style="left:1225px;top:680px;width:54px;height:13px;background:#ececf0;border:1px solid #c4c4ca"></div>
<svg width="180" height="14" viewBox="1100 679 180 14" style="position:absolute;left:1100px;top:679px" fill="none">
<path d="M1116.500 686.500l4.500-4v2.500h4v3h-4v2.500z" fill="#333"/><path d="M1149.500 686.500l-4.500-4v2.500h-4v3h4v2.500z" fill="#333"/>
<path d="M1214 685l3 3 3-3M1270 685l3 3 3-3" stroke="#444" stroke-width="1"/>
</svg>
<div class="t" style="left:1159.20px;top:683.00px;font-size:7.8px;color:#222;transform:scaleX(0.865);transform-origin:0 0;">GLOBAL</div>
<div class="t" style="left:1226.40px;top:683.00px;font-size:7.8px;color:#222;transform:scaleX(0.895);transform-origin:0 0;">Tonf, m, C</div>
<div class="abs" id="share"></div>
<div class="t" style="left:497.00px;top:670.00px;font-size:7.6px;color:#3c4043;transform:scaleX(1.051);transform-origin:0 0;">us.bbcollab.com está compartiendo tu pantalla.</div>
<div class="abs" id="stop"></div>
<div class="t" style="left:682.30px;top:670.00px;font-size:7.6px;color:#fff;font-weight:bold;transform:scaleX(1.009);transform-origin:0 0;">Dejar de compartir</div>
<div class="t" style="left:768.40px;top:670.00px;font-size:7.6px;color:#1a73e8;transform:scaleX(1.021);transform-origin:0 0;">Ocultar</div>
<div class="abs" style="left:487px;top:668px;width:1px;height:9px;background:#c8c8c8"></div><div class="abs" style="left:489px;top:668px;width:1px;height:9px;background:#c8c8c8"></div>
<div class="abs" id="task"></div><div class="abs" id="search"></div>
<div class="t" style="left:58.80px;top:703.00px;font-size:9.6px;color:#3a3a3a;transform:scaleX(1.005);transform-origin:0 0;">Escribe aquí para buscar</div>
<svg width="1280" height="27" viewBox="0 693 1280 27" style="position:absolute;left:0;top:693px" fill="none">
<path d="M10.500 702.300l4.600-.7v4.600h-4.600zM15.900 701.500l5.600-.8v5.500h-5.600zM10.500 707h4.600v4.600l-4.600-.7zM15.900 707h5.600v5.500l-5.600-.8z" fill="#fff"/>
<circle cx="47.500" cy="705" r="3.600" stroke="#333" stroke-width="1.200"/><path d="M45 708l-4.500 4.500" stroke="#333" stroke-width="1.300"/>
<path d="M270.500 702h9v7.500h-9zM282 702v7.500M282.800 702.500h1M282.800 709h1" stroke="#f0f0f0" stroke-width="1.200"/><path d="M272 704.500h6" stroke="#f0f0f0"/>
<path d="M304.500 706.500c0-4 2.500-6.800 6.500-6.800 3.800 0 6 2.600 6 6.300h-9c.2 2.300 2 3.400 4.200 3.400 1.500 0 3-.4 4.200-1.100v2.800c-1.400.8-3 1.200-4.800 1.200-4.200 0-7.100-2.500-7.100-5.800z" fill="#1e88e5"/><path d="M308 704.200h5.500c0-1.500-1-2.500-2.600-2.500s-2.700 1-2.900 2.500z" fill="#1d1c23"/>
<path d="M336 700h5l1.300 1.500h8.200v10.500h-14.500z" fill="#f6c244"/><path d="M336 703.500h14.500v8.500h-14.500z" fill="#fbd568"/><path d="M339 707.500h8.500v4.500h-8.500z" fill="#4a90d8"/>
<path d="M369.500 703.500h13.500v9.500h-13.500z" fill="#f4f4f4"/><path d="M373.500 703.500v-1.800a2.800 2.800 0 0 1 5.600 0v1.800" stroke="#f4f4f4" stroke-width="1.200"/><path d="M373.300 705.500h2.600v2.600h-2.600z" fill="#e84c3c"/><path d="M376.600 705.500h2.600v2.600h-2.600z" fill="#6cbf3c"/><path d="M373.300 708.800h2.600v2.600h-2.600z" fill="#2c8ce0"/><path d="M376.600 708.800h2.600v2.600h-2.600z" fill="#f4b41c"/>
<path d="M401.500 705l7-5 7 5v7.500h-14z" fill="#2f8ee8"/><path d="M401.500 705l7 4.500 7-4.500" stroke="#bfe0ff" stroke-width="1"/><circle cx="415.500" cy="711.500" r="3.600" fill="#2a2a32" stroke="#d8d8d8" stroke-width=".9"/>
<circle cx="441.200" cy="706.200" r="3.600" stroke="#f4f4f4" stroke-width="2.200"/><circle cx="441.200" cy="706.200" r="5.500" stroke="#f4f4f4" stroke-width="2" stroke-dasharray="2.100 2.220"/>
<circle cx="473.800" cy="706.200" r="7" fill="#1aa0e8"/>
<path d="M500.500 700h6.500v12h-6.500z" fill="#f6cf5c"/><path d="M504 712.500a3 3 0 0 1 1-5.600 3.600 3.600 0 0 1 6.600.8 2.500 2.500 0 0 1 .4 4.800z" fill="#2a86e0"/>
<path d="M534 699.500h10v13h-10z" fill="#4a7cc0"/><path d="M536 701h6v4.500h-6zM536 707h6v4.500h-6z" fill="#7cb0ec"/>
<circle cx="572.500" cy="706.200" r="7" fill="#e8453c"/><path d="M572.500 706.200L566.400 709.700A7 7 0 0 0 572.500 713.200L576 707z" fill="#3aa757"/><path d="M572.500 713.200A7 7 0 0 0 578.560 702.700H572.500z" fill="#fbc116"/><path d="M566.440 702.700A7 7 0 0 1 578.560 702.700H572.500z" fill="#e8453c"/><circle cx="572.500" cy="706.200" r="3.200" fill="#f4f4f4"/><circle cx="572.500" cy="706.200" r="2.500" fill="#4285f4"/>
<path d="M600 700h12.500v12.500h-12.500z" fill="#1f7a48"/><path d="M597.500 702.500h8v8h-8z" fill="#0f5c32"/>
<path d="M632.500 700h12.500v12.500h-12.500z" fill="#2b6cd0"/><path d="M630 702.500h8v8h-8z" fill="#1a4ea0"/>
<path d="M663 699.500h14v13.500h-14z" fill="#f4f0ee"/>
<path d="M687 693h32.500v27h-32.500z" fill="#3d3c44"/>
<path d="M728.500 699h15.500v15h-15.500z" fill="#b3231a"/><path d="M732 711c2-2 3.500-5 4-8.500.5 3 2.500 5.500 5 6.500-3-.3-6.500.5-9 2z" stroke="#fff" stroke-width="1.100"/>
<path d="M298 719.300H325" stroke="#6a8cb2" stroke-width="1.500"/>
<path d="M331 719.300H357" stroke="#6a8cb2" stroke-width="1.500"/>
<path d="M428 719.300H455" stroke="#6a8cb2" stroke-width="1.500"/>
<path d="M559 719.300H586" stroke="#6a8cb2" stroke-width="1.500"/>
<path d="M592 719.300H618" stroke="#6a8cb2" stroke-width="1.500"/>
<path d="M624 719.300H651" stroke="#6a8cb2" stroke-width="1.500"/>
<path d="M657 719.300H683" stroke="#6a8cb2" stroke-width="1.500"/>
<path d="M688 719.300H718" stroke="#6a8cb2" stroke-width="1.500"/>
<path d="M1098.500 708l3.500-3.500 3.500 3.500" stroke="#f0f0f0" stroke-width="1.100"/>
<path d="M1114.500 709.500a2.400 2.400 0 0 1 .5-4.700 3.300 3.300 0 0 1 6.300.6 2.100 2.100 0 0 1 .2 4.100z" fill="#f0f0f0"/>
<path d="M1129.500 704h8.500v5h-8.500z" fill="#f0f0f0"/><path d="M1138.500 705.500h1v2h-1z" fill="#f0f0f0"/><path d="M1130.500 703l1.500-2" stroke="#f0f0f0"/>
<path d="M1146 702.500h8v5.500h-8zM1148 710.500h4" stroke="#f0f0f0" stroke-width="1"/><path d="M1151 706.500h3.500v5h-3.500z" fill="#1d1c23" stroke="#f0f0f0" stroke-width=".9"/>
<path d="M1161.500 705h2l2.500-2.500v7.500l-2.500-2.500h-2z" stroke="#f0f0f0" stroke-width="1"/><path d="M1168 704a3 3 0 0 1 0 4.800M1170 702.500a5 5 0 0 1 0 7.600" stroke="#f0f0f0" stroke-width=".9"/>
<path d="M1253 701.500h10.500v8h-4l-2.500 2.500v-2.500h-4z" fill="#f0f0f0"/><path d="M1255 704h6.500M1255 706.500h6.500" stroke="#1d1c23" stroke-width=".8"/>
</svg>
<svg width="16" height="16" style="position:absolute;left:695.5px;top:698.5px"><g transform="translate(0 0)"><path d="M0 0Q8.0 3.2 16 0Q12.8 8.0 16 16Q8.0 12.8 0 16Q3.2 8.0 0 0Z" fill="#f8ae36"/><circle cx="8.0" cy="8.0" r="5.76" fill="#f39a22"/><path d="M0.96 0.96L15.04 15.04M15.04 0.96L0.96 15.04" stroke="#fbd48a" stroke-width="1.12"/><rect x="4.16" y="4.16" width="3.20" height="3.20" fill="#e2570e"/><rect x="4.16" y="8.64" width="3.20" height="3.20" fill="#e2570e"/><rect x="8.64" y="4.16" width="3.20" height="3.20" fill="#e2570e"/><rect x="8.64" y="8.64" width="3.20" height="3.20" fill="#e2570e"/></g></svg>
<div class="t" style="left:469.500px;top:700.500px;font-size:11.500px;font-weight:bold;color:#fff">S</div>
<div class="t" style="left:598.500px;top:703.300px;font-size:7px;font-weight:bold;color:#fff">X</div>
<div class="t" style="left:630.500px;top:703.300px;font-size:7px;font-weight:bold;color:#fff">W</div>
<div class="t" style="left:664.500px;top:699.500px;font-size:14px;font-weight:bold;color:#c8281e">A</div>
<div class="t" style="left:413.800px;top:708.800px;font-size:5.500px;color:#fff">1</div>
<div class="t" style="left:1179.50px;top:703.00px;font-size:7.8px;color:#f0f0f0;transform:scaleX(0.794);transform-origin:0 0;">ESP</div>
<div class="t" style="left:1212.50px;top:697.00px;font-size:7.8px;color:#f0f0f0;transform:scaleX(0.897);transform-origin:0 0;">19:09</div>
<div class="t" style="left:1204.20px;top:709.00px;font-size:7.8px;color:#f0f0f0;transform:scaleX(0.995);transform-origin:0 0;">5/06/2020</div>
</div></body></html>
